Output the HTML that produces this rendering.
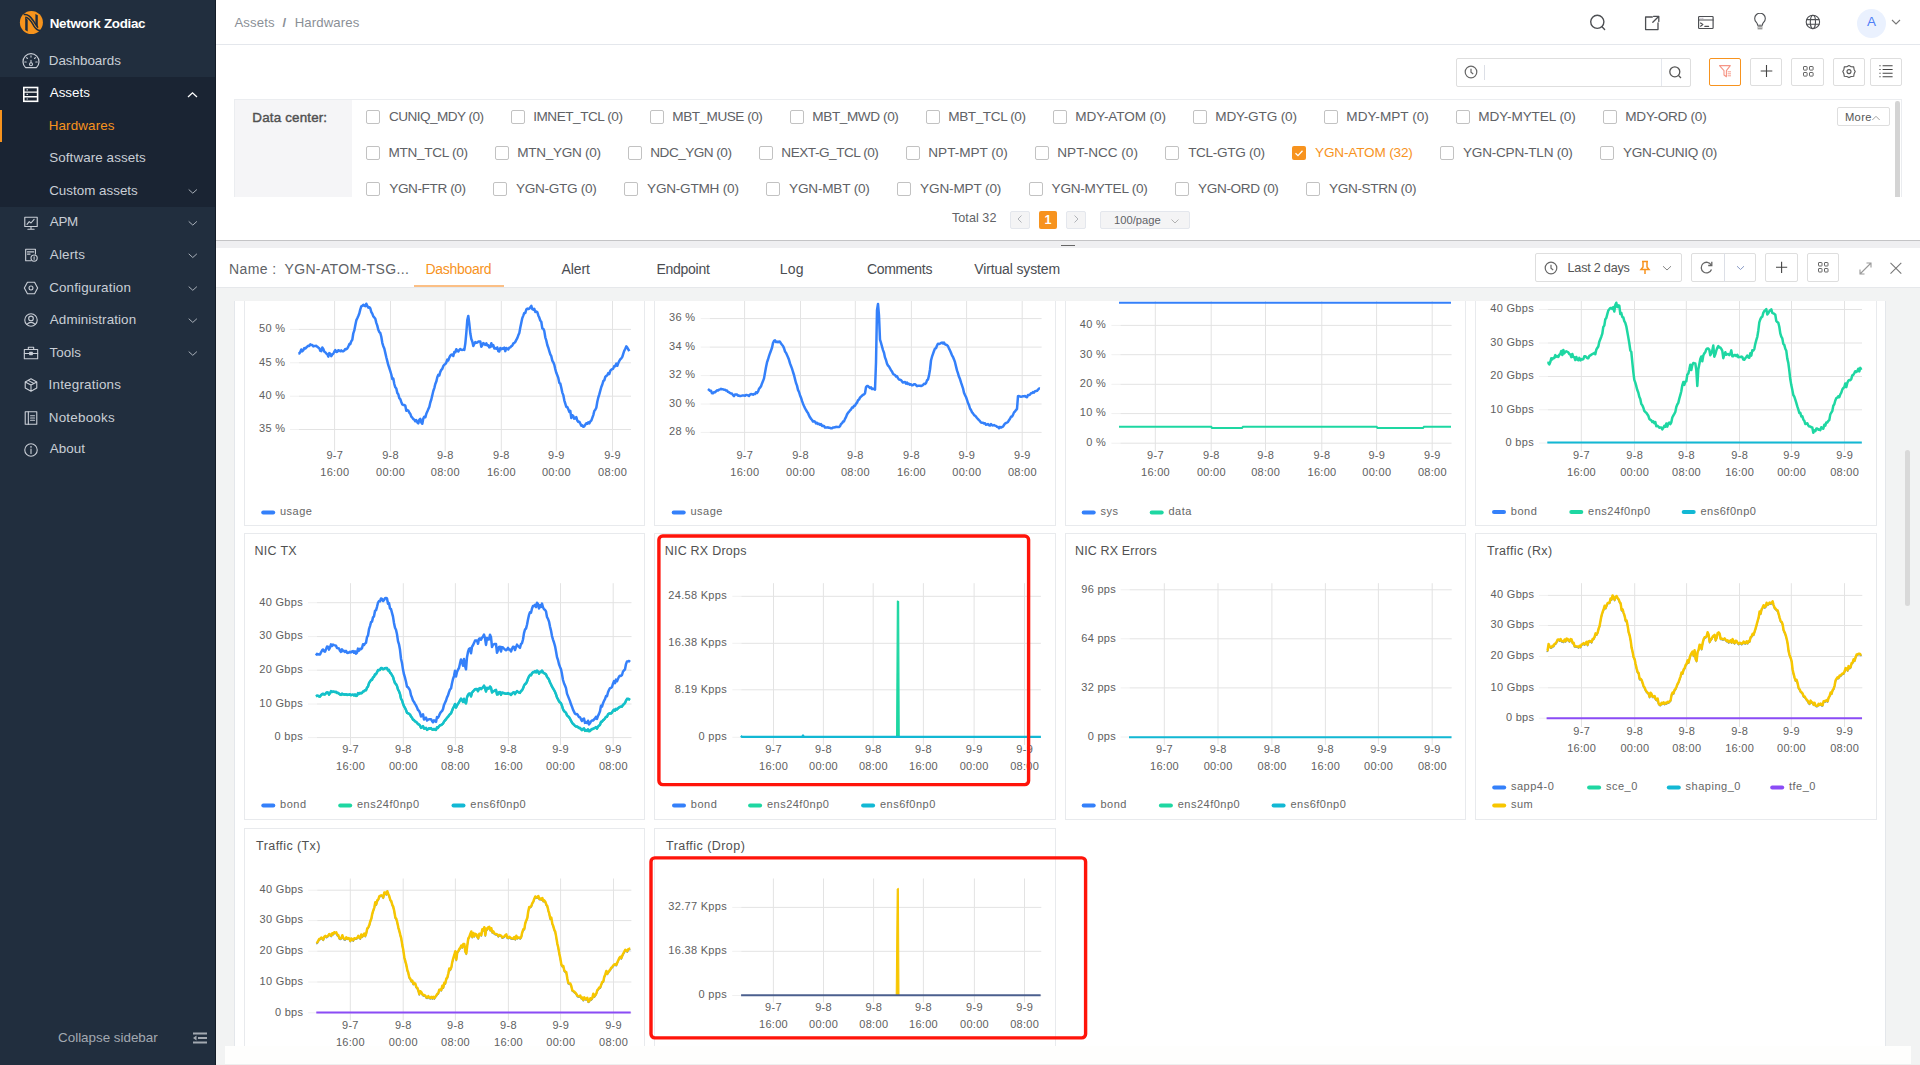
<!DOCTYPE html>
<html><head><meta charset="utf-8"><title>Hardwares</title>
<style>
html,body{margin:0;padding:0;width:1920px;height:1065px;overflow:hidden;background:#fff;font-family:"Liberation Sans", sans-serif;}
.t{position:absolute;line-height:20px;height:20px;white-space:nowrap;}
svg text{font-family:"Liberation Sans", sans-serif;}
</style></head><body>
<div style="position:absolute;left:0px;top:0px;width:216px;height:1065px;background:#212e3e;"></div><div style="position:absolute;left:0px;top:77px;width:216px;height:130px;background:#1a2433;"></div><div style="position:absolute;left:215px;top:0px;width:1px;height:1065px;background:#141c27;"></div><svg style="position:absolute;left:16px;top:8px;" width="32" height="30" viewBox="0 0 32 30"><circle cx="15.4" cy="14.5" r="11.5" fill="#f7941d"/><path d="M9.2 9.3 L11.7 12 V23.6 L9.2 22 Z" fill="#1d2b3d"/><path d="M19.4 6.1 L21.8 7.2 V19.6 L19.4 16.8 Z" fill="#1d2b3d"/><path d="M7.6 6.6 C12.5 5.8 15 9.5 17.5 13 C19.5 16 20.5 18.5 22.2 19.6" fill="none" stroke="#1d2b3d" stroke-width="1.5"/><path d="M9.3 9.2 C13.5 9.4 15.5 14 17.6 17.6 C19.3 20.4 21 22.4 24.2 22.6" fill="none" stroke="#1d2b3d" stroke-width="1.5"/></svg><div class="t" style="left:49.73px;top:13.55px;font-size:13.4px;color:#ffffff;font-weight:bold;letter-spacing:-0.299px;">Network Zodiac</div><div style="position:absolute;left:0px;top:110px;width:2px;height:32px;background:#f7931e;"></div><div class="t" style="left:48.73px;top:50.65px;font-size:13.4px;color:#c9ced6;font-weight:normal;letter-spacing:-0.009px;">Dashboards</div><svg style="position:absolute;left:21px;top:52px;" width="20" height="18" viewBox="0 0 20 18"><path d="M4.6 15.6 H15.4 A8 8 0 1 0 4.6 15.6 Z" fill="none" stroke="#c9ced6" stroke-width="1.2" stroke-linejoin="round"/><circle cx="10" cy="12.2" r="1.5" fill="none" stroke="#c9ced6" stroke-width="1.1"/><path d="M10 10.6 V8.4 M3.8 10 H5.2 M14.8 10 H16.2 M10 3.9 V5.1 M5.6 5.7 L6.4 6.5 M14.4 5.7 L13.6 6.5" stroke="#c9ced6" stroke-width="1.1" stroke-linecap="round"/></svg><div class="t" style="left:49.80px;top:82.75px;font-size:13.4px;color:#ffffff;font-weight:normal;letter-spacing:-0.026px;">Assets</div><svg style="position:absolute;left:22px;top:86px;" width="18" height="17" viewBox="0 0 18 17"><rect x="1.8" y="1.5" width="13.8" height="13.8" fill="none" stroke="#fff" stroke-width="1.6"/><path d="M1.8 6.1 H15.6 M1.8 10.7 H15.6" stroke="#fff" stroke-width="1.4"/><path d="M4.6 3.8 H5.8 M4.6 8.4 H5.8 M4.6 13 H5.8" stroke="#fff" stroke-width="1.2"/></svg><svg style="position:absolute;left:186px;top:90px;" width="13" height="9" viewBox="0 0 13 9"><path d="M2 7 L6.5 2.8 L11 7" fill="none" stroke="#ffffff" stroke-width="1.3"/></svg><div class="t" style="left:48.73px;top:115.65px;font-size:13.4px;color:#f7931e;font-weight:normal;letter-spacing:0.132px;">Hardwares</div><div class="t" style="left:49.20px;top:147.85px;font-size:13.4px;color:#c9ced6;font-weight:normal;letter-spacing:0.095px;">Software assets</div><div class="t" style="left:49.13px;top:180.55px;font-size:13.4px;color:#c9ced6;font-weight:normal;letter-spacing:0.008px;">Custom assets</div><svg style="position:absolute;left:186px;top:187px;" width="13" height="9" viewBox="0 0 13 9"><path d="M2.7 2.5 L6.8 6.200000000000017 L10.9 2.5" fill="none" stroke="#aab1ba" stroke-width="1"/></svg><div class="t" style="left:49.80px;top:212.45px;font-size:13.4px;color:#c9ced6;font-weight:normal;letter-spacing:-0.269px;">APM</div><svg style="position:absolute;left:23px;top:215.00px" width="16" height="16" viewBox="0 0 18 18"><rect x="2" y="2.5" width="14" height="10.5" fill="none" stroke="#c9ced6" stroke-width="1.25" stroke-linejoin="round" stroke-linecap="round"/><path d="M9 13 V16 M5.5 16 H12.5 M4.5 10.5 L7 7.5 L9 9 L12.5 5" fill="none" stroke="#c9ced6" stroke-width="1.25" stroke-linejoin="round" stroke-linecap="round"/></svg><svg style="position:absolute;left:186px;top:219px;" width="13" height="9" viewBox="0 0 13 9"><path d="M2.7 2.4000000000000057 L6.8 6.100000000000023 L10.9 2.4000000000000057" fill="none" stroke="#aab1ba" stroke-width="1"/></svg><div class="t" style="left:49.80px;top:244.85px;font-size:13.4px;color:#c9ced6;font-weight:normal;letter-spacing:0.186px;">Alerts</div><svg style="position:absolute;left:23px;top:247.40px" width="16" height="16" viewBox="0 0 18 18"><path d="M9 15.5 H3 V2.5 H14 V8" fill="none" stroke="#c9ced6" stroke-width="1.25" stroke-linejoin="round" stroke-linecap="round"/><path d="M5 5.5 H12 M5 8 H8" fill="none" stroke="#c9ced6" stroke-width="1.25" stroke-linejoin="round" stroke-linecap="round"/><circle cx="12.5" cy="12.5" r="3.5" fill="none" stroke="#c9ced6" stroke-width="1.25" stroke-linejoin="round" stroke-linecap="round"/><path d="M12.5 11 V12.8 M12.5 14 V14.2" fill="none" stroke="#c9ced6" stroke-width="1.25" stroke-linejoin="round" stroke-linecap="round"/></svg><svg style="position:absolute;left:186px;top:251px;" width="13" height="9" viewBox="0 0 13 9"><path d="M2.7 2.8000000000000114 L6.8 6.5 L10.9 2.8000000000000114" fill="none" stroke="#aab1ba" stroke-width="1"/></svg><div class="t" style="left:49.13px;top:277.65px;font-size:13.4px;color:#c9ced6;font-weight:normal;letter-spacing:0.173px;">Configuration</div><svg style="position:absolute;left:23px;top:280.20px" width="16" height="16" viewBox="0 0 18 18"><path d="M5 2.5 H13 L16.5 9 L13 15.5 H5 L1.5 9 Z" fill="none" stroke="#c9ced6" stroke-width="1.25" stroke-linejoin="round" stroke-linecap="round"/><circle cx="9" cy="9" r="2.2" fill="none" stroke="#c9ced6" stroke-width="1.25" stroke-linejoin="round" stroke-linecap="round"/></svg><svg style="position:absolute;left:186px;top:284px;" width="13" height="9" viewBox="0 0 13 9"><path d="M2.7 2.6000000000000227 L6.8 6.300000000000011 L10.9 2.6000000000000227" fill="none" stroke="#aab1ba" stroke-width="1"/></svg><div class="t" style="left:49.80px;top:309.75px;font-size:13.4px;color:#c9ced6;font-weight:normal;letter-spacing:0.114px;">Administration</div><svg style="position:absolute;left:23px;top:312.30px" width="16" height="16" viewBox="0 0 18 18"><circle cx="9" cy="9" r="7" fill="none" stroke="#c9ced6" stroke-width="1.25" stroke-linejoin="round" stroke-linecap="round"/><circle cx="9" cy="7.3" r="2.6" fill="none" stroke="#c9ced6" stroke-width="1.25" stroke-linejoin="round" stroke-linecap="round"/><path d="M4.3 14 Q9 9.5 13.7 14" fill="none" stroke="#c9ced6" stroke-width="1.25" stroke-linejoin="round" stroke-linecap="round"/></svg><svg style="position:absolute;left:186px;top:316px;" width="13" height="9" viewBox="0 0 13 9"><path d="M2.7 2.7000000000000455 L6.8 6.400000000000034 L10.9 2.7000000000000455" fill="none" stroke="#aab1ba" stroke-width="1"/></svg><div class="t" style="left:49.53px;top:342.65px;font-size:13.4px;color:#c9ced6;font-weight:normal;letter-spacing:0.062px;">Tools</div><svg style="position:absolute;left:23px;top:345.20px" width="16" height="16" viewBox="0 0 18 18"><rect x="1.5" y="5" width="15" height="10.5" fill="none" stroke="#c9ced6" stroke-width="1.25" stroke-linejoin="round" stroke-linecap="round"/><path d="M6 5 V2.5 H12 V5 M1.5 9.5 H16.5" fill="none" stroke="#c9ced6" stroke-width="1.25" stroke-linejoin="round" stroke-linecap="round"/><rect x="7.5" y="8.3" width="3" height="2.5" fill="none" stroke="#c9ced6" stroke-width="1.25" stroke-linejoin="round" stroke-linecap="round"/></svg><svg style="position:absolute;left:186px;top:349px;" width="13" height="9" viewBox="0 0 13 9"><path d="M2.7 2.6000000000000227 L6.8 6.300000000000011 L10.9 2.6000000000000227" fill="none" stroke="#aab1ba" stroke-width="1"/></svg><div class="t" style="left:48.59px;top:374.65px;font-size:13.4px;color:#c9ced6;font-weight:normal;letter-spacing:0.215px;">Integrations</div><svg style="position:absolute;left:23px;top:377.20px" width="16" height="16" viewBox="0 0 18 18"><path d="M9 2 L15.5 5.5 V12.5 L9 16 L2.5 12.5 V5.5 Z M2.5 5.5 L9 9 L15.5 5.5 M9 9 V16 M5.7 3.8 L12.3 7.3" fill="none" stroke="#c9ced6" stroke-width="1.25" stroke-linejoin="round" stroke-linecap="round"/></svg><div class="t" style="left:48.73px;top:407.85px;font-size:13.4px;color:#c9ced6;font-weight:normal;letter-spacing:0.236px;">Notebooks</div><svg style="position:absolute;left:23px;top:410.40px" width="16" height="16" viewBox="0 0 18 18"><rect x="2.5" y="2" width="13" height="14" fill="none" stroke="#c9ced6" stroke-width="1.25" stroke-linejoin="round" stroke-linecap="round"/><path d="M6 2 V16 M8.5 6.5 H13 M8.5 9 H13 M8.5 11.5 H13" fill="none" stroke="#c9ced6" stroke-width="1.25" stroke-linejoin="round" stroke-linecap="round"/></svg><div class="t" style="left:49.80px;top:439.35px;font-size:13.4px;color:#c9ced6;font-weight:normal;letter-spacing:0.023px;">About</div><svg style="position:absolute;left:23px;top:441.90px" width="16" height="16" viewBox="0 0 18 18"><circle cx="9" cy="9" r="7" fill="none" stroke="#c9ced6" stroke-width="1.25" stroke-linejoin="round" stroke-linecap="round"/><path d="M9 8 V13" fill="none" stroke="#c9ced6" stroke-width="1.25" stroke-linejoin="round" stroke-linecap="round" stroke-width="1.6"/><circle cx="9" cy="5.5" r="0.9" fill="#c9ced6"/></svg><div class="t" style="left:58.08px;top:1027.65px;font-size:13.4px;color:#a3a9b1;font-weight:normal;letter-spacing:-0.009px;">Collapse sidebar</div><svg style="position:absolute;left:192px;top:1032px;" width="16" height="12" viewBox="0 0 16 12"><path d="M1 1.5 H15 M6 6 H15 M1 10.5 H15" stroke="#a3a9b1" stroke-width="2"/><path d="M1 6 L4.5 3.5 V8.5 Z" fill="#a3a9b1"/></svg><div style="position:absolute;left:216px;top:44px;width:1704px;height:1px;background:#e4e7ec;"></div><div class="t" style="left:234.40px;top:12.75px;font-size:13.2px;color:#8a8f96;font-weight:normal;letter-spacing:0.112px;">Assets</div><div class="t" style="left:282.50px;top:12.75px;font-size:13.2px;color:#8a8f96;font-weight:bold;">/</div><div class="t" style="left:294.64px;top:12.75px;font-size:13.2px;color:#8a8f96;font-weight:normal;letter-spacing:0.125px;">Hardwares</div><svg style="position:absolute;left:1588px;top:13px;" width="20" height="20" viewBox="0 0 20 20"><circle cx="9.3" cy="8.8" r="6.6" fill="none" stroke="#4d4f53" stroke-linecap="round" stroke-linejoin="round" stroke-width="1.4"/><path d="M14 13.8 L16.6 16.4" fill="none" stroke="#4d4f53" stroke-linecap="round" stroke-linejoin="round" stroke-width="1.4"/></svg><svg style="position:absolute;left:1643px;top:14px;" width="18" height="18" viewBox="0 0 18 18"><path d="M9.3 3 H2.6 V15.6 H15 V9" fill="none" stroke="#4d4f53" stroke-linecap="round" stroke-linejoin="round" stroke-width="1.3"/><path d="M10.5 2.3 H15.8 V7.6 M15.6 2.5 L9.8 8.3" fill="none" stroke="#4d4f53" stroke-linecap="round" stroke-linejoin="round" stroke-width="1.3"/></svg><svg style="position:absolute;left:1697px;top:15px;" width="18" height="15" viewBox="0 0 18 15"><rect x="1.6" y="1.5" width="14.5" height="12" rx="0.8" fill="none" stroke="#4d4f53" stroke-linecap="round" stroke-linejoin="round" stroke-width="1.2"/><path d="M1.6 5 H16.1" fill="none" stroke="#4d4f53" stroke-linecap="round" stroke-linejoin="round" stroke-width="1.1"/><path d="M3.6 8 L5.8 9.6 L3.6 11.2 M7.8 11.3 H11.6" fill="none" stroke="#4d4f53" stroke-linecap="round" stroke-linejoin="round" stroke-width="1.2"/><path d="M3.5 3.3 H7" stroke="#7a6a8a" stroke-width="0.7" stroke-dasharray="1 0.8"/></svg><svg style="position:absolute;left:1753px;top:13px;" width="14" height="18" viewBox="0 0 14 18"><path d="M4.6 12.2 Q4.6 10.6 3.2 9.2 A5.3 5.3 0 1 1 10.8 9.2 Q9.4 10.6 9.4 12.2 Z" fill="none" stroke="#4d4f53" stroke-linecap="round" stroke-linejoin="round" stroke-width="1.1"/><rect x="4.6" y="12.6" width="4.8" height="3.8" fill="#9a9a9a"/><path d="M4.6 14.5 H9.4" stroke="#cfcfcf" stroke-width="0.8"/></svg><svg style="position:absolute;left:1805px;top:14px;" width="16" height="16" viewBox="0 0 16 16"><circle cx="7.9" cy="7.9" r="6.7" fill="none" stroke="#4d4f53" stroke-linecap="round" stroke-linejoin="round" stroke-width="1.1"/><ellipse cx="7.9" cy="7.9" rx="2.6" ry="6.7" fill="none" stroke="#4d4f53" stroke-linecap="round" stroke-linejoin="round" stroke-width="1.1"/><path d="M1.8 5.6 H14 M1.8 10.2 H14" fill="none" stroke="#4d4f53" stroke-linecap="round" stroke-linejoin="round" stroke-width="1.1"/></svg><div style="position:absolute;left:1857px;top:8.8px;width:29px;height:29px;background:#eaf1fe;border-radius:50%;"></div><div class="t" style="left:1671.50px;width:400px;text-align:center;top:12.46px;font-size:13.5px;color:#4f7ef7;font-weight:normal;">A</div><svg style="position:absolute;left:1891px;top:19px;" width="10" height="7" viewBox="0 0 10 7"><path d="M1 1 L5 5 L9 1" fill="none" stroke="#777" stroke-width="1.1"/></svg><div style="position:absolute;left:1456px;top:58px;width:235px;height:29px;box-sizing:border-box;border:1px solid #dedede;border-radius:2px;background:#fff;"></div><div style="position:absolute;left:1661px;top:59px;width:1px;height:27px;background:#e4e7ed;"></div><div style="position:absolute;left:1484px;top:65px;width:1px;height:15px;background:#dcdfe6;"></div><svg style="position:absolute;left:1464px;top:65px;" width="14" height="14" viewBox="0 0 14 14"><circle cx="7" cy="7" r="5.8" fill="none" stroke="#666" stroke-width="1.2"/><path d="M7 3.8 V7.2 L9.2 9" fill="none" stroke="#666" stroke-width="1.2"/></svg><svg style="position:absolute;left:1668px;top:65px;" width="15" height="15" viewBox="0 0 15 15"><circle cx="6.8" cy="6.8" r="5" fill="none" stroke="#555" stroke-width="1.3"/><path d="M10.5 10.5 L13 13" stroke="#555" stroke-width="1.3"/></svg><div style="position:absolute;left:1709px;top:58.2px;width:32px;height:27.6px;box-sizing:border-box;border:1px solid #f7931e;border-radius:2px;background:#fff;"></div><div style="position:absolute;left:1750px;top:58.2px;width:32px;height:27.6px;box-sizing:border-box;border:1px solid #dedede;border-radius:2px;background:#fff;"></div><div style="position:absolute;left:1791px;top:58.2px;width:33px;height:27.6px;box-sizing:border-box;border:1px solid #dedede;border-radius:2px;background:#fff;"></div><div style="position:absolute;left:1833px;top:58.2px;width:32px;height:27.6px;box-sizing:border-box;border:1px solid #dedede;border-radius:2px;background:#fff;"></div><div style="position:absolute;left:1870px;top:58.2px;width:32px;height:27.6px;box-sizing:border-box;border:1px solid #dedede;border-radius:2px;background:#fff;"></div><svg style="position:absolute;left:1718px;top:64px;" width="15" height="15" viewBox="0 0 15 15"><path d="M1.5 1.6 H12.3 L8.4 6.6 V12.8 L6 11 V6.6 Z" fill="none" stroke="#f69585" stroke-width="1.1" stroke-linejoin="round"/><path d="M9.6 7.8 H13 M9.6 9.8 H13 M9.6 11.8 H13" stroke="#f69585" stroke-width="0.9"/></svg><svg style="position:absolute;left:1759px;top:63px;" width="15" height="15" viewBox="0 0 15 15"><path d="M7.5 2 V14 M1.7 8 H13.3" stroke="#444" stroke-width="1.1"/></svg><svg style="position:absolute;left:1801px;top:64px;" width="14" height="14" viewBox="0 0 14 14"><g fill="none" stroke="#666" stroke-width="1"><rect x="2.5" y="2.5" width="3.6" height="3.6" rx=".5"/><rect x="8.5" y="2.5" width="3.6" height="3.6" rx=".5"/><rect x="2.5" y="8.5" width="3.6" height="3.6" rx=".5"/><rect x="8.5" y="8.5" width="3.6" height="3.6" rx=".5"/></g></svg><svg style="position:absolute;left:1841px;top:63px;" width="16" height="16" viewBox="0 0 16 16"><path d="M8 2.6 L10.2 3.7 L12.7 3.9 L13.1 6.4 L14.2 8.6 L13.1 10.8 L12.7 13.3 L10.2 13.5 L8 14.6 L5.8 13.5 L3.3 13.3 L2.9 10.8 L1.8 8.6 L2.9 6.4 L3.3 3.9 L5.8 3.7 Z" fill="none" stroke="#555" stroke-width="1.1" stroke-linejoin="round"/><circle cx="8" cy="8.6" r="2" fill="none" stroke="#555" stroke-width="1.1"/></svg><svg style="position:absolute;left:1878px;top:63px;" width="16" height="16" viewBox="0 0 16 16"><g stroke="#444" stroke-width="1.1"><path d="M4.6 2.8 H14.6 M4.6 6.5 H14.6 M4.6 10.2 H14.6 M4.6 13.8 H14.6"/><path d="M1.4 2.8 H2.6 M1.4 6.5 H2.6 M1.4 10.2 H2.6 M1.4 13.8 H2.6"/></g></svg><div style="position:absolute;left:234px;top:99px;width:1668px;height:98px;box-sizing:border-box;border:1px solid #ebedf0;border-bottom:none;background:#fff;"></div><div style="position:absolute;left:235px;top:100px;width:117px;height:97px;background:#f5f5f7;"></div><div class="t" style="left:252.33px;top:108.05px;font-size:13.4px;color:#505050;font-weight:normal;letter-spacing:0.165px;-webkit-text-stroke:0.4px #505050;">Data center:</div><div style="position:absolute;left:1895.3px;top:101px;width:4.5px;height:96px;background:#d4d4d4;border-radius:2.2px 2.2px 0 0;"></div><div style="position:absolute;left:366.25px;top:110.4px;width:14px;height:14px;box-sizing:border-box;border:1px solid #c2c2c2;border-radius:2px;background:#fff;"></div><div class="t" style="left:388.97px;top:106.86px;font-size:13.6px;color:#606266;font-weight:normal;letter-spacing:-0.565px;">CUNIQ_MDY (0)</div><div style="position:absolute;left:511px;top:110.4px;width:14px;height:14px;box-sizing:border-box;border:1px solid #c2c2c2;border-radius:2px;background:#fff;"></div><div class="t" style="left:533.18px;top:106.86px;font-size:13.6px;color:#606266;font-weight:normal;letter-spacing:-0.472px;">IMNET_TCL (0)</div><div style="position:absolute;left:650px;top:110.4px;width:14px;height:14px;box-sizing:border-box;border:1px solid #c2c2c2;border-radius:2px;background:#fff;"></div><div class="t" style="left:672.31px;top:106.86px;font-size:13.6px;color:#606266;font-weight:normal;letter-spacing:-0.486px;">MBT_MUSE (0)</div><div style="position:absolute;left:790px;top:110.4px;width:14px;height:14px;box-sizing:border-box;border:1px solid #c2c2c2;border-radius:2px;background:#fff;"></div><div class="t" style="left:812.31px;top:106.86px;font-size:13.6px;color:#606266;font-weight:normal;letter-spacing:-0.404px;">MBT_MWD (0)</div><div style="position:absolute;left:926px;top:110.4px;width:14px;height:14px;box-sizing:border-box;border:1px solid #c2c2c2;border-radius:2px;background:#fff;"></div><div class="t" style="left:948.31px;top:106.86px;font-size:13.6px;color:#606266;font-weight:normal;letter-spacing:-0.420px;">MBT_TCL (0)</div><div style="position:absolute;left:1053px;top:110.4px;width:14px;height:14px;box-sizing:border-box;border:1px solid #c2c2c2;border-radius:2px;background:#fff;"></div><div class="t" style="left:1075.31px;top:106.86px;font-size:13.6px;color:#606266;font-weight:normal;letter-spacing:-0.115px;">MDY-ATOM (0)</div><div style="position:absolute;left:1193px;top:110.4px;width:14px;height:14px;box-sizing:border-box;border:1px solid #c2c2c2;border-radius:2px;background:#fff;"></div><div class="t" style="left:1215.31px;top:106.86px;font-size:13.6px;color:#606266;font-weight:normal;letter-spacing:-0.170px;">MDY-GTG (0)</div><div style="position:absolute;left:1324px;top:110.4px;width:14px;height:14px;box-sizing:border-box;border:1px solid #c2c2c2;border-radius:2px;background:#fff;"></div><div class="t" style="left:1346.31px;top:106.86px;font-size:13.6px;color:#606266;font-weight:normal;letter-spacing:0.026px;">MDY-MPT (0)</div><div style="position:absolute;left:1456px;top:110.4px;width:14px;height:14px;box-sizing:border-box;border:1px solid #c2c2c2;border-radius:2px;background:#fff;"></div><div class="t" style="left:1478.31px;top:106.86px;font-size:13.6px;color:#606266;font-weight:normal;letter-spacing:-0.094px;">MDY-MYTEL (0)</div><div style="position:absolute;left:1603px;top:110.4px;width:14px;height:14px;box-sizing:border-box;border:1px solid #c2c2c2;border-radius:2px;background:#fff;"></div><div class="t" style="left:1625.31px;top:106.86px;font-size:13.6px;color:#606266;font-weight:normal;letter-spacing:-0.271px;">MDY-ORD (0)</div><div style="position:absolute;left:366.25px;top:146.3px;width:14px;height:14px;box-sizing:border-box;border:1px solid #c2c2c2;border-radius:2px;background:#fff;"></div><div class="t" style="left:388.56px;top:142.76px;font-size:13.6px;color:#606266;font-weight:normal;letter-spacing:-0.320px;">MTN_TCL (0)</div><div style="position:absolute;left:495px;top:146.3px;width:14px;height:14px;box-sizing:border-box;border:1px solid #c2c2c2;border-radius:2px;background:#fff;"></div><div class="t" style="left:517.31px;top:142.76px;font-size:13.6px;color:#606266;font-weight:normal;letter-spacing:-0.323px;">MTN_YGN (0)</div><div style="position:absolute;left:628px;top:146.3px;width:14px;height:14px;box-sizing:border-box;border:1px solid #c2c2c2;border-radius:2px;background:#fff;"></div><div class="t" style="left:650.31px;top:142.76px;font-size:13.6px;color:#606266;font-weight:normal;letter-spacing:-0.523px;">NDC_YGN (0)</div><div style="position:absolute;left:759px;top:146.3px;width:14px;height:14px;box-sizing:border-box;border:1px solid #c2c2c2;border-radius:2px;background:#fff;"></div><div class="t" style="left:781.31px;top:142.76px;font-size:13.6px;color:#606266;font-weight:normal;letter-spacing:-0.474px;">NEXT-G_TCL (0)</div><div style="position:absolute;left:906px;top:146.3px;width:14px;height:14px;box-sizing:border-box;border:1px solid #c2c2c2;border-radius:2px;background:#fff;"></div><div class="t" style="left:928.31px;top:142.76px;font-size:13.6px;color:#606266;font-weight:normal;letter-spacing:-0.023px;">NPT-MPT (0)</div><div style="position:absolute;left:1035px;top:146.3px;width:14px;height:14px;box-sizing:border-box;border:1px solid #c2c2c2;border-radius:2px;background:#fff;"></div><div class="t" style="left:1057.31px;top:142.76px;font-size:13.6px;color:#606266;font-weight:normal;letter-spacing:-0.018px;">NPT-NCC (0)</div><div style="position:absolute;left:1165px;top:146.3px;width:14px;height:14px;box-sizing:border-box;border:1px solid #c2c2c2;border-radius:2px;background:#fff;"></div><div class="t" style="left:1188.13px;top:142.76px;font-size:13.6px;color:#606266;font-weight:normal;letter-spacing:-0.325px;">TCL-GTG (0)</div><div style="position:absolute;left:1292px;top:146.3px;width:14px;height:14px;background:#f7931e;border-radius:2px;"></div><svg style="position:absolute;left:1292px;top:146.3px;" width="14" height="14" viewBox="0 0 14 14"><path d="M3.5 7.2 L6 9.6 L10.5 4.8" fill="none" stroke="#fff" stroke-width="1.3"/></svg><div class="t" style="left:1315.06px;top:142.76px;font-size:13.6px;color:#f7931e;font-weight:normal;letter-spacing:-0.175px;">YGN-ATOM (32)</div><div style="position:absolute;left:1440px;top:146.3px;width:14px;height:14px;box-sizing:border-box;border:1px solid #c2c2c2;border-radius:2px;background:#fff;"></div><div class="t" style="left:1463.06px;top:142.76px;font-size:13.6px;color:#606266;font-weight:normal;letter-spacing:-0.245px;">YGN-CPN-TLN (0)</div><div style="position:absolute;left:1600px;top:146.3px;width:14px;height:14px;box-sizing:border-box;border:1px solid #c2c2c2;border-radius:2px;background:#fff;"></div><div class="t" style="left:1623.06px;top:142.76px;font-size:13.6px;color:#606266;font-weight:normal;letter-spacing:-0.320px;">YGN-CUNIQ (0)</div><div style="position:absolute;left:366.25px;top:182.3px;width:14px;height:14px;box-sizing:border-box;border:1px solid #c2c2c2;border-radius:2px;background:#fff;"></div><div class="t" style="left:389.31px;top:178.76px;font-size:13.6px;color:#606266;font-weight:normal;letter-spacing:-0.418px;">YGN-FTR (0)</div><div style="position:absolute;left:493px;top:182.3px;width:14px;height:14px;box-sizing:border-box;border:1px solid #c2c2c2;border-radius:2px;background:#fff;"></div><div class="t" style="left:516.06px;top:178.76px;font-size:13.6px;color:#606266;font-weight:normal;letter-spacing:-0.299px;">YGN-GTG (0)</div><div style="position:absolute;left:624px;top:182.3px;width:14px;height:14px;box-sizing:border-box;border:1px solid #c2c2c2;border-radius:2px;background:#fff;"></div><div class="t" style="left:647.06px;top:178.76px;font-size:13.6px;color:#606266;font-weight:normal;letter-spacing:-0.230px;">YGN-GTMH (0)</div><div style="position:absolute;left:766px;top:182.3px;width:14px;height:14px;box-sizing:border-box;border:1px solid #c2c2c2;border-radius:2px;background:#fff;"></div><div class="t" style="left:789.06px;top:178.76px;font-size:13.6px;color:#606266;font-weight:normal;letter-spacing:-0.197px;">YGN-MBT (0)</div><div style="position:absolute;left:897px;top:182.3px;width:14px;height:14px;box-sizing:border-box;border:1px solid #c2c2c2;border-radius:2px;background:#fff;"></div><div class="t" style="left:920.06px;top:178.76px;font-size:13.6px;color:#606266;font-weight:normal;letter-spacing:-0.147px;">YGN-MPT (0)</div><div style="position:absolute;left:1028.5px;top:182.3px;width:14px;height:14px;box-sizing:border-box;border:1px solid #c2c2c2;border-radius:2px;background:#fff;"></div><div class="t" style="left:1051.56px;top:178.76px;font-size:13.6px;color:#606266;font-weight:normal;letter-spacing:-0.238px;">YGN-MYTEL (0)</div><div style="position:absolute;left:1175px;top:182.3px;width:14px;height:14px;box-sizing:border-box;border:1px solid #c2c2c2;border-radius:2px;background:#fff;"></div><div class="t" style="left:1198.06px;top:178.76px;font-size:13.6px;color:#606266;font-weight:normal;letter-spacing:-0.374px;">YGN-ORD (0)</div><div style="position:absolute;left:1306px;top:182.3px;width:14px;height:14px;box-sizing:border-box;border:1px solid #c2c2c2;border-radius:2px;background:#fff;"></div><div class="t" style="left:1329.06px;top:178.76px;font-size:13.6px;color:#606266;font-weight:normal;letter-spacing:-0.358px;">YGN-STRN (0)</div><div style="position:absolute;left:1837.2px;top:107.2px;width:52.5px;height:19.3px;box-sizing:border-box;border:1px solid #dedede;border-radius:2px;background:#fff;"></div><div class="t" style="left:1844.90px;top:107.03px;font-size:11.2px;color:#555;font-weight:normal;letter-spacing:0.373px;">More</div><svg style="position:absolute;left:1871px;top:114px;" width="10" height="8" viewBox="0 0 10 8"><path d="M1.3 6 L5 2.3 L8.7 6" fill="none" stroke="#999" stroke-width="0.9"/></svg><div class="t" style="left:951.95px;top:207.94px;font-size:12.6px;color:#606266;font-weight:normal;letter-spacing:0.055px;">Total 32</div><div style="position:absolute;left:1010px;top:211px;width:20px;height:18px;box-sizing:border-box;border:1px solid #e4e7ed;border-radius:2px;background:#f4f4f5;"></div><svg style="position:absolute;left:1016px;top:213.5px;" width="8" height="10" viewBox="0 0 8 10"><path d="M5.5 1.5 L2 5 L5.5 8.5" fill="none" stroke="#b0b3b8" stroke-width="1"/></svg><div style="position:absolute;left:1039px;top:211px;width:18px;height:18px;background:#f7931e;border-radius:2px;"></div><div class="t" style="left:848.00px;width:400px;text-align:center;top:210.14px;font-size:12.5px;color:#fff;font-weight:bold;">1</div><div style="position:absolute;left:1066px;top:211px;width:20px;height:18px;box-sizing:border-box;border:1px solid #e4e7ed;border-radius:2px;background:#f4f4f5;"></div><svg style="position:absolute;left:1072px;top:213.5px;" width="8" height="10" viewBox="0 0 8 10"><path d="M2.5 1.5 L6 5 L2.5 8.5" fill="none" stroke="#b0b3b8" stroke-width="1"/></svg><div style="position:absolute;left:1100px;top:211px;width:90px;height:18px;box-sizing:border-box;border:1px solid #e4e7ed;border-radius:2px;background:#f4f4f5;"></div><div class="t" style="left:1114.00px;top:209.63px;font-size:11.2px;color:#606266;font-weight:normal;">100/page</div><svg style="position:absolute;left:1170px;top:217.5px;" width="10" height="7" viewBox="0 0 10 7"><path d="M1.5 1.5 L5 5 L8.5 1.5" fill="none" stroke="#aaa" stroke-width="0.9"/></svg><div style="position:absolute;left:216px;top:240px;width:1704px;height:8px;background:#efeff1;border-top:1px solid #c4c4c6;box-sizing:border-box;"></div><div style="position:absolute;left:1061px;top:245px;width:14px;height:1.3px;background:#666;"></div><div style="position:absolute;left:216px;top:248px;width:1704px;height:40px;background:#fff;border-bottom:1px solid #e6e8eb;box-sizing:border-box;"></div><div class="t" style="left:229.08px;top:258.86px;font-size:14px;color:#606266;font-weight:normal;letter-spacing:0.380px;">Name</div><div class="t" style="left:272.20px;top:258.86px;font-size:14px;color:#606266;font-weight:normal;">:</div><div class="t" style="left:284.45px;top:258.86px;font-size:14px;color:#606266;font-weight:normal;letter-spacing:0.364px;">YGN-ATOM-TSG...</div><div class="t" style="left:425.48px;top:258.86px;font-size:14px;color:#f7931e;font-weight:normal;letter-spacing:-0.304px;">Dashboard</div><div style="position:absolute;left:414px;top:285px;width:90px;height:2px;background:#fbbf85;"></div><div class="t" style="left:561.60px;top:258.86px;font-size:14px;color:#4a4d52;font-weight:normal;letter-spacing:-0.125px;">Alert</div><div class="t" style="left:656.38px;top:258.86px;font-size:14px;color:#4a4d52;font-weight:normal;letter-spacing:-0.249px;">Endpoint</div><div class="t" style="left:779.68px;top:258.86px;font-size:14px;color:#4a4d52;font-weight:normal;letter-spacing:0.310px;">Log</div><div class="t" style="left:867.00px;top:258.86px;font-size:14px;color:#4a4d52;font-weight:normal;letter-spacing:-0.329px;">Comments</div><div class="t" style="left:974.33px;top:258.86px;font-size:14px;color:#4a4d52;font-weight:normal;letter-spacing:-0.148px;">Virtual system</div><div style="position:absolute;left:1535px;top:253.4px;width:147px;height:28.4px;box-sizing:border-box;border:1px solid #dedede;border-radius:2px;background:#fff;"></div><svg style="position:absolute;left:1544px;top:261px;" width="14" height="14" viewBox="0 0 14 14"><circle cx="7" cy="7" r="5.8" fill="none" stroke="#666" stroke-width="1.2"/><path d="M7 3.8 V7.2 L9.2 9" fill="none" stroke="#666" stroke-width="1.2"/></svg><div class="t" style="left:1567.59px;top:258.14px;font-size:12.6px;color:#555;font-weight:normal;letter-spacing:-0.220px;">Last 2 days</div><svg style="position:absolute;left:1639px;top:260px;" width="12" height="15" viewBox="0 0 12 15"><path d="M3 1.5 H9 M4 1.5 V7 L2 9.5 H10 L8 7 V1.5 M6 9.5 V14" fill="none" stroke="#f7931e" stroke-width="1.5"/></svg><svg style="position:absolute;left:1662px;top:265px;" width="10" height="7" viewBox="0 0 10 7"><path d="M1 1.2 L5 5 L9 1.2" fill="none" stroke="#777" stroke-width="0.9"/></svg><div style="position:absolute;left:1691px;top:253.4px;width:65px;height:28.4px;box-sizing:border-box;border:1px solid #dedede;border-radius:2px;background:#fff;"></div><div style="position:absolute;left:1724px;top:253.4px;width:1px;height:28.4px;background:#dcdfe6;"></div><svg style="position:absolute;left:1699px;top:260px;" width="15" height="15" viewBox="0 0 15 15"><path d="M12.2 5 A5.3 5.3 0 1 0 12.5 9.5" fill="none" stroke="#666" stroke-width="1.3"/><path d="M12.8 1.8 V5.5 H9.2" fill="none" stroke="#666" stroke-width="1.3"/></svg><svg style="position:absolute;left:1736px;top:265px;" width="9" height="6" viewBox="0 0 9 6"><path d="M1 1.2 L4.5 4.5 L8 1.2" fill="none" stroke="#7a8fc0" stroke-width="0.9"/></svg><div style="position:absolute;left:1765px;top:253.4px;width:33px;height:28.4px;box-sizing:border-box;border:1px solid #dedede;border-radius:2px;background:#fff;"></div><svg style="position:absolute;left:1773px;top:259px;" width="17" height="17" viewBox="0 0 17 17"><path d="M8.6 2.7 V13.9 M3 8.3 H14.2" stroke="#444" stroke-width="1.1"/></svg><div style="position:absolute;left:1807px;top:253.4px;width:32px;height:28.4px;box-sizing:border-box;border:1px solid #dedede;border-radius:2px;background:#fff;"></div><svg style="position:absolute;left:1816px;top:260px;" width="14" height="14" viewBox="0 0 14 14"><g fill="none" stroke="#666" stroke-width="1"><rect x="2.5" y="2.5" width="3.5" height="3.5" rx=".5"/><rect x="8.5" y="2.5" width="3.5" height="3.5" rx=".5"/><rect x="2.5" y="8.5" width="3.5" height="3.5" rx=".5"/><rect x="8.5" y="8.5" width="3.5" height="3.5" rx=".5"/></g></svg><svg style="position:absolute;left:1857px;top:260px;" width="17" height="17" viewBox="0 0 17 17"><path d="M3 14 L14 3 M9.5 3 H14 V7.5 M3 9.5 V14 H7.5" fill="none" stroke="#999" stroke-width="1.1"/></svg><svg style="position:absolute;left:1889px;top:261px;" width="14" height="14" viewBox="0 0 14 14"><path d="M1.5 1.8 L12.3 12.6 M12.3 1.8 L1.5 12.6" stroke="#777" stroke-width="1.1"/></svg><div style="position:absolute;left:216px;top:288px;width:1704px;height:777px;background:#f2f3f3;"></div><div style="position:absolute;left:234px;top:301px;width:1652px;height:745px;background:#fff;box-sizing:border-box;border-left:1px solid #e4e7eb;border-right:1px solid #e4e7eb;"></div><div style="position:absolute;left:1905px;top:450px;width:5px;height:156px;background:#d9d9d9;border-radius:3px;"></div><svg style="position:absolute;left:0;top:0" width="1920" height="1065" viewBox="0 0 1920 1065"><defs><clipPath id="cc"><rect x="235" y="301" width="1650" height="745"/></clipPath></defs><g clip-path="url(#cc)"><rect x="244.5" y="239.5" width="400.0" height="286" fill="#fff" stroke="#e8eaed" stroke-width="1"/><rect x="654.5" y="239.5" width="401.0" height="286" fill="#fff" stroke="#e8eaed" stroke-width="1"/><rect x="1065.5" y="239.5" width="400.0" height="286" fill="#fff" stroke="#e8eaed" stroke-width="1"/><rect x="1475.5" y="239.5" width="401.0" height="286" fill="#fff" stroke="#e8eaed" stroke-width="1"/><rect x="244.5" y="533.5" width="400.0" height="286" fill="#fff" stroke="#e8eaed" stroke-width="1"/><rect x="654.5" y="533.5" width="401.0" height="286" fill="#fff" stroke="#e8eaed" stroke-width="1"/><rect x="1065.5" y="533.5" width="400.0" height="286" fill="#fff" stroke="#e8eaed" stroke-width="1"/><rect x="1475.5" y="533.5" width="401.0" height="286" fill="#fff" stroke="#e8eaed" stroke-width="1"/><rect x="244.5" y="828.5" width="400.0" height="286" fill="#fff" stroke="#e8eaed" stroke-width="1"/><rect x="654.5" y="828.5" width="401.0" height="286" fill="#fff" stroke="#e8eaed" stroke-width="1"/><text x="285.3" y="332.2" font-size="11" fill="#606060" text-anchor="end" letter-spacing="0.3">50 %</text><path d="M290 329.4 H299" stroke="#f0f0f0" stroke-width="1"/><path d="M299 329.4 H631" stroke="#e3e3e3" stroke-width="1"/><text x="285.3" y="365.6" font-size="11" fill="#606060" text-anchor="end" letter-spacing="0.3">45 %</text><path d="M290 362.8 H299" stroke="#f0f0f0" stroke-width="1"/><path d="M299 362.8 H631" stroke="#e3e3e3" stroke-width="1"/><text x="285.3" y="399.0" font-size="11" fill="#606060" text-anchor="end" letter-spacing="0.3">40 %</text><path d="M290 396.2 H299" stroke="#f0f0f0" stroke-width="1"/><path d="M299 396.2 H631" stroke="#e3e3e3" stroke-width="1"/><text x="285.3" y="432.3" font-size="11" fill="#606060" text-anchor="end" letter-spacing="0.3">35 %</text><path d="M290 429.5 H299" stroke="#f0f0f0" stroke-width="1"/><path d="M299 429.5 H631" stroke="#e3e3e3" stroke-width="1"/><path d="M334.6 289 V451.5" stroke="#e3e3e3" stroke-width="1"/><text x="334.8" y="459.1" font-size="11" fill="#606060" text-anchor="middle" letter-spacing="0.3">9-7</text><text x="334.8" y="475.9" font-size="11" fill="#606060" text-anchor="middle" letter-spacing="0.3">16:00</text><path d="M390.5 289 V451.5" stroke="#e3e3e3" stroke-width="1"/><text x="390.6" y="459.1" font-size="11" fill="#606060" text-anchor="middle" letter-spacing="0.3">9-8</text><text x="390.6" y="475.9" font-size="11" fill="#606060" text-anchor="middle" letter-spacing="0.3">00:00</text><path d="M445.2 289 V451.5" stroke="#e3e3e3" stroke-width="1"/><text x="445.3" y="459.1" font-size="11" fill="#606060" text-anchor="middle" letter-spacing="0.3">9-8</text><text x="445.3" y="475.9" font-size="11" fill="#606060" text-anchor="middle" letter-spacing="0.3">08:00</text><path d="M501.3 289 V451.5" stroke="#e3e3e3" stroke-width="1"/><text x="501.4" y="459.1" font-size="11" fill="#606060" text-anchor="middle" letter-spacing="0.3">9-8</text><text x="501.4" y="475.9" font-size="11" fill="#606060" text-anchor="middle" letter-spacing="0.3">16:00</text><path d="M556.3 289 V451.5" stroke="#e3e3e3" stroke-width="1"/><text x="556.4" y="459.1" font-size="11" fill="#606060" text-anchor="middle" letter-spacing="0.3">9-9</text><text x="556.4" y="475.9" font-size="11" fill="#606060" text-anchor="middle" letter-spacing="0.3">00:00</text><path d="M612.5 289 V451.5" stroke="#e3e3e3" stroke-width="1"/><text x="612.6" y="459.1" font-size="11" fill="#606060" text-anchor="middle" letter-spacing="0.3">9-9</text><text x="612.6" y="475.9" font-size="11" fill="#606060" text-anchor="middle" letter-spacing="0.3">08:00</text><path d="M298.3 353.6 L299.3 353.4 L300.3 352.0 L301.3 349.5 L302.3 351.3 L303.3 350.1 L304.3 348.1 L305.3 348.5 L306.3 347.5 L307.3 346.6 L308.3 345.8 L309.3 345.9 L310.3 344.4 L311.3 345.0 L312.3 344.9 L313.3 346.4 L314.3 346.1 L315.3 346.0 L316.3 345.8 L317.3 346.8 L318.3 347.6 L319.3 348.2 L320.3 350.8 L321.3 351.1 L322.3 347.5 L323.3 348.9 L324.3 351.7 L325.3 352.3 L326.3 353.6 L327.3 354.3 L328.3 356.6 L329.3 353.1 L330.3 353.7 L331.3 356.2 L332.3 354.4 L333.3 353.7 L334.3 351.7 L335.3 350.1 L336.3 352.0 L337.3 351.8 L338.3 350.2 L339.3 350.7 L340.3 351.3 L341.3 350.4 L342.3 351.2 L343.3 351.2 L344.3 350.5 L345.3 349.0 L346.3 349.2 L347.3 348.5 L348.3 346.6 L349.3 344.1 L350.3 344.2 L351.3 341.2 L352.3 339.8 L353.3 333.3 L354.3 330.4 L355.3 325.2 L356.3 320.4 L357.3 318.3 L358.3 316.0 L359.3 313.5 L360.3 309.4 L361.3 306.4 L362.3 305.9 L363.3 304.8 L364.3 305.7 L365.3 306.2 L366.3 303.7 L367.3 306.0 L368.3 307.7 L369.3 307.2 L370.3 308.3 L371.3 312.0 L372.3 313.6 L373.3 316.4 L374.3 317.4 L375.3 318.7 L376.3 322.9 L377.3 325.6 L378.3 329.8 L379.3 332.1 L380.3 333.0 L381.3 336.8 L382.3 342.8 L383.3 346.2 L384.3 348.5 L385.3 352.9 L386.3 357.3 L387.3 361.1 L388.3 365.2 L389.3 368.0 L390.3 371.1 L391.3 374.5 L392.3 379.0 L393.3 378.6 L394.3 384.0 L395.3 387.3 L396.3 388.5 L397.3 392.9 L398.3 394.3 L399.3 398.1 L400.3 399.2 L401.3 402.0 L402.3 404.4 L403.3 405.0 L404.3 404.9 L405.3 405.8 L406.3 410.8 L407.3 410.0 L408.3 410.5 L409.3 412.7 L410.3 413.8 L411.3 416.6 L412.3 417.6 L413.3 419.1 L414.3 419.6 L415.3 421.3 L416.3 420.1 L417.3 422.3 L418.3 423.4 L419.3 419.9 L420.3 418.8 L421.3 422.4 L422.3 423.8 L423.3 418.6 L424.3 416.7 L425.3 417.3 L426.3 413.8 L427.3 411.6 L428.3 409.1 L429.3 407.0 L430.3 402.5 L431.3 399.5 L432.3 395.3 L433.3 391.0 L434.3 388.1 L435.3 384.0 L436.3 381.6 L437.3 377.2 L438.3 374.8 L439.3 375.5 L440.3 371.9 L441.3 369.9 L442.3 368.8 L443.3 366.1 L444.3 364.8 L445.3 364.1 L446.3 362.5 L447.3 359.6 L448.3 360.4 L449.3 357.6 L450.3 355.7 L451.3 354.8 L452.3 354.6 L453.3 355.9 L454.3 352.0 L455.3 352.3 L456.3 349.2 L457.3 350.9 L458.3 351.5 L459.3 349.9 L460.3 349.1 L461.3 349.8 L462.3 350.0 L463.3 349.5 L464.3 350.0 L465.3 343.6 L466.3 333.1 L467.3 320.0 L468.3 315.9 L469.3 323.6 L470.3 333.3 L471.3 339.0 L472.3 341.4 L473.3 346.0 L474.3 344.0 L475.3 342.1 L476.3 342.8 L477.3 342.6 L478.3 341.5 L479.3 341.5 L480.3 341.5 L481.3 346.7 L482.3 345.3 L483.3 343.1 L484.3 343.7 L485.3 344.9 L486.3 343.4 L487.3 345.4 L488.3 345.2 L489.3 347.4 L490.3 347.1 L491.3 343.2 L492.3 346.2 L493.3 345.1 L494.3 348.5 L495.3 348.1 L496.3 348.7 L497.3 347.4 L498.3 351.1 L499.3 351.5 L500.3 348.0 L501.3 349.3 L502.3 348.3 L503.3 348.8 L504.3 347.7 L505.3 351.1 L506.3 348.0 L507.3 348.6 L508.3 349.4 L509.3 347.7 L510.3 347.3 L511.3 346.2 L512.3 345.6 L513.3 343.4 L514.3 343.0 L515.3 341.9 L516.3 339.9 L517.3 338.1 L518.3 335.3 L519.3 333.1 L520.3 327.5 L521.3 322.8 L522.3 318.1 L523.3 315.6 L524.3 312.9 L525.3 312.9 L526.3 309.5 L527.3 308.6 L528.3 309.0 L529.3 308.6 L530.3 307.4 L531.3 305.9 L532.3 309.2 L533.3 309.7 L534.3 308.8 L535.3 312.0 L536.3 311.4 L537.3 312.2 L538.3 315.4 L539.3 317.6 L540.3 320.5 L541.3 321.7 L542.3 328.4 L543.3 328.8 L544.3 331.1 L545.3 337.3 L546.3 340.5 L547.3 345.0 L548.3 347.7 L549.3 351.1 L550.3 354.4 L551.3 356.2 L552.3 360.6 L553.3 362.3 L554.3 364.8 L555.3 369.1 L556.3 372.8 L557.3 375.3 L558.3 377.9 L559.3 382.8 L560.3 383.6 L561.3 387.7 L562.3 392.6 L563.3 395.1 L564.3 400.3 L565.3 403.7 L566.3 407.0 L567.3 407.1 L568.3 409.3 L569.3 411.9 L570.3 410.8 L571.3 418.1 L572.3 415.3 L573.3 416.1 L574.3 418.7 L575.3 418.3 L576.3 417.1 L577.3 420.6 L578.3 421.9 L579.3 421.7 L580.3 423.5 L581.3 425.8 L582.3 425.3 L583.3 426.8 L584.3 426.3 L585.3 424.7 L586.3 423.2 L587.3 423.7 L588.3 422.3 L589.3 423.3 L590.3 421.4 L591.3 420.6 L592.3 417.8 L593.3 415.1 L594.3 411.0 L595.3 409.8 L596.3 407.8 L597.3 401.7 L598.3 397.5 L599.3 394.4 L600.3 390.7 L601.3 387.0 L602.3 384.5 L603.3 381.1 L604.3 380.3 L605.3 376.9 L606.3 375.8 L607.3 375.3 L608.3 373.1 L609.3 373.9 L610.3 370.8 L611.3 369.6 L612.3 369.2 L613.3 368.4 L614.3 365.9 L615.3 366.2 L616.3 363.6 L617.3 365.8 L618.3 363.1 L619.3 360.9 L620.3 359.3 L621.3 358.4 L622.3 356.9 L623.3 353.6 L624.3 350.7 L625.3 348.7 L626.3 346.4 L627.3 347.6 L628.3 349.3 L629.3 351.2" fill="none" stroke="#3480fa" stroke-width="2.5" stroke-linejoin="round"/><rect x="261.2" y="510.5" width="14" height="4" rx="2" fill="#3480fa"/><text x="280.0" y="515.4" font-size="11" fill="#666" text-anchor="start" letter-spacing="0.5">usage</text><text x="695.3" y="321.4" font-size="11" fill="#606060" text-anchor="end" letter-spacing="0.3">36 %</text><path d="M700.7 318.6 H709.7" stroke="#f0f0f0" stroke-width="1"/><path d="M709.7 318.6 H1041.6" stroke="#e3e3e3" stroke-width="1"/><text x="695.3" y="349.9" font-size="11" fill="#606060" text-anchor="end" letter-spacing="0.3">34 %</text><path d="M700.7 347.1 H709.7" stroke="#f0f0f0" stroke-width="1"/><path d="M709.7 347.1 H1041.6" stroke="#e3e3e3" stroke-width="1"/><text x="695.3" y="378.4" font-size="11" fill="#606060" text-anchor="end" letter-spacing="0.3">32 %</text><path d="M700.7 375.6 H709.7" stroke="#f0f0f0" stroke-width="1"/><path d="M709.7 375.6 H1041.6" stroke="#e3e3e3" stroke-width="1"/><text x="695.3" y="406.8" font-size="11" fill="#606060" text-anchor="end" letter-spacing="0.3">30 %</text><path d="M700.7 404.0 H709.7" stroke="#f0f0f0" stroke-width="1"/><path d="M709.7 404.0 H1041.6" stroke="#e3e3e3" stroke-width="1"/><text x="695.3" y="435.2" font-size="11" fill="#606060" text-anchor="end" letter-spacing="0.3">28 %</text><path d="M700.7 432.4 H709.7" stroke="#f0f0f0" stroke-width="1"/><path d="M709.7 432.4 H1041.6" stroke="#e3e3e3" stroke-width="1"/><path d="M744.6 289 V451.5" stroke="#e3e3e3" stroke-width="1"/><text x="744.8" y="459.1" font-size="11" fill="#606060" text-anchor="middle" letter-spacing="0.3">9-7</text><text x="744.8" y="475.9" font-size="11" fill="#606060" text-anchor="middle" letter-spacing="0.3">16:00</text><path d="M800.5 289 V451.5" stroke="#e3e3e3" stroke-width="1"/><text x="800.6" y="459.1" font-size="11" fill="#606060" text-anchor="middle" letter-spacing="0.3">9-8</text><text x="800.6" y="475.9" font-size="11" fill="#606060" text-anchor="middle" letter-spacing="0.3">00:00</text><path d="M855.3 289 V451.5" stroke="#e3e3e3" stroke-width="1"/><text x="855.4" y="459.1" font-size="11" fill="#606060" text-anchor="middle" letter-spacing="0.3">9-8</text><text x="855.4" y="475.9" font-size="11" fill="#606060" text-anchor="middle" letter-spacing="0.3">08:00</text><path d="M911.4 289 V451.5" stroke="#e3e3e3" stroke-width="1"/><text x="911.5" y="459.1" font-size="11" fill="#606060" text-anchor="middle" letter-spacing="0.3">9-8</text><text x="911.5" y="475.9" font-size="11" fill="#606060" text-anchor="middle" letter-spacing="0.3">16:00</text><path d="M966.6 289 V451.5" stroke="#e3e3e3" stroke-width="1"/><text x="966.8" y="459.1" font-size="11" fill="#606060" text-anchor="middle" letter-spacing="0.3">9-9</text><text x="966.8" y="475.9" font-size="11" fill="#606060" text-anchor="middle" letter-spacing="0.3">00:00</text><path d="M1022.2 289 V451.5" stroke="#e3e3e3" stroke-width="1"/><text x="1022.4" y="459.1" font-size="11" fill="#606060" text-anchor="middle" letter-spacing="0.3">9-9</text><text x="1022.4" y="475.9" font-size="11" fill="#606060" text-anchor="middle" letter-spacing="0.3">08:00</text><path d="M708.0 389.0 L709.0 389.9 L710.0 390.8 L711.0 390.7 L712.0 393.2 L713.0 393.2 L714.0 392.3 L715.0 392.2 L716.0 391.3 L717.0 390.3 L718.0 390.6 L719.0 389.7 L720.0 389.3 L721.0 388.8 L722.0 389.3 L723.0 389.2 L724.0 389.8 L725.0 389.7 L726.0 390.5 L727.0 390.6 L728.0 391.9 L729.0 392.2 L730.0 392.9 L731.0 393.6 L732.0 393.6 L733.0 395.1 L734.0 396.1 L735.0 394.6 L736.0 394.4 L737.0 394.6 L738.0 395.8 L739.0 395.6 L740.0 396.0 L741.0 395.9 L742.0 395.6 L743.0 395.6 L744.0 395.4 L745.0 395.8 L746.0 394.9 L747.0 395.1 L748.0 395.4 L749.0 396.0 L750.0 394.6 L751.0 394.1 L752.0 394.2 L753.0 394.7 L754.0 393.9 L755.0 394.1 L756.0 392.3 L757.0 392.9 L758.0 391.6 L759.0 388.8 L760.0 387.7 L761.0 386.3 L762.0 383.4 L763.0 381.1 L764.0 378.4 L765.0 372.8 L766.0 367.2 L767.0 362.4 L768.0 359.5 L769.0 356.1 L770.0 353.2 L771.0 350.5 L772.0 347.8 L773.0 343.1 L774.0 340.9 L775.0 340.4 L776.0 342.0 L777.0 341.6 L778.0 342.2 L779.0 341.5 L780.0 341.8 L781.0 343.5 L782.0 344.8 L783.0 346.0 L784.0 348.1 L785.0 351.4 L786.0 352.7 L787.0 355.0 L788.0 357.2 L789.0 359.8 L790.0 363.4 L791.0 366.0 L792.0 368.6 L793.0 372.0 L794.0 375.0 L795.0 379.1 L796.0 383.0 L797.0 385.6 L798.0 389.9 L799.0 392.0 L800.0 395.2 L801.0 397.7 L802.0 400.9 L803.0 403.7 L804.0 406.0 L805.0 408.1 L806.0 410.0 L807.0 411.7 L808.0 413.1 L809.0 415.4 L810.0 417.3 L811.0 418.8 L812.0 419.8 L813.0 421.5 L814.0 421.3 L815.0 421.6 L816.0 423.4 L817.0 422.7 L818.0 424.1 L819.0 423.8 L820.0 424.7 L821.0 424.1 L822.0 425.9 L823.0 425.8 L824.0 425.9 L825.0 427.6 L826.0 427.6 L827.0 427.4 L828.0 427.3 L829.0 427.8 L830.0 427.8 L831.0 428.3 L832.0 428.3 L833.0 427.5 L834.0 427.4 L835.0 427.3 L836.0 426.8 L837.0 427.1 L838.0 427.1 L839.0 426.9 L840.0 426.2 L841.0 424.0 L842.0 423.3 L843.0 421.6 L844.0 421.4 L845.0 418.9 L846.0 417.1 L847.0 414.5 L848.0 412.8 L849.0 411.9 L850.0 410.4 L851.0 409.5 L852.0 407.6 L853.0 407.5 L854.0 405.8 L855.0 405.8 L856.0 403.7 L857.0 402.8 L858.0 400.3 L859.0 399.6 L860.0 397.7 L861.0 396.6 L862.0 395.7 L863.0 394.8 L864.0 394.3 L865.0 393.3 L866.0 387.3 L867.0 385.9 L868.0 386.0 L869.0 387.1 L870.0 387.9 L871.0 387.4 L872.0 389.0 L873.0 388.8 L874.0 389.0 L875.0 389.6 L876.0 362.6 L877.0 310.1 L878.0 303.9 L879.0 315.7 L880.0 339.7 L881.0 342.9 L882.0 346.5 L883.0 350.1 L884.0 352.8 L885.0 357.4 L886.0 360.0 L887.0 363.6 L888.0 365.6 L889.0 366.5 L890.0 368.3 L891.0 370.3 L892.0 371.6 L893.0 373.8 L894.0 374.5 L895.0 375.1 L896.0 376.5 L897.0 376.2 L898.0 378.3 L899.0 379.5 L900.0 379.7 L901.0 380.1 L902.0 381.4 L903.0 382.6 L904.0 382.2 L905.0 382.0 L906.0 383.6 L907.0 382.5 L908.0 383.9 L909.0 383.8 L910.0 384.7 L911.0 384.2 L912.0 385.4 L913.0 385.1 L914.0 384.2 L915.0 384.2 L916.0 385.2 L917.0 386.2 L918.0 385.8 L919.0 385.8 L920.0 385.7 L921.0 386.1 L922.0 385.7 L923.0 385.0 L924.0 383.8 L925.0 384.0 L926.0 383.1 L927.0 380.3 L928.0 379.5 L929.0 375.4 L930.0 369.5 L931.0 360.5 L932.0 356.7 L933.0 353.8 L934.0 351.0 L935.0 348.6 L936.0 348.2 L937.0 345.5 L938.0 343.7 L939.0 344.0 L940.0 343.6 L941.0 343.0 L942.0 342.6 L943.0 343.4 L944.0 342.6 L945.0 344.4 L946.0 344.7 L947.0 345.2 L948.0 346.1 L949.0 348.6 L950.0 350.4 L951.0 352.7 L952.0 355.4 L953.0 357.0 L954.0 359.4 L955.0 362.2 L956.0 366.4 L957.0 370.4 L958.0 373.4 L959.0 376.8 L960.0 379.1 L961.0 382.4 L962.0 385.4 L963.0 388.3 L964.0 392.7 L965.0 395.1 L966.0 397.0 L967.0 399.8 L968.0 403.0 L969.0 405.1 L970.0 408.5 L971.0 410.0 L972.0 412.2 L973.0 413.4 L974.0 414.9 L975.0 415.7 L976.0 416.7 L977.0 418.0 L978.0 419.1 L979.0 420.2 L980.0 421.2 L981.0 422.5 L982.0 422.7 L983.0 422.7 L984.0 423.5 L985.0 423.3 L986.0 424.7 L987.0 424.6 L988.0 424.0 L989.0 425.3 L990.0 425.5 L991.0 424.0 L992.0 425.1 L993.0 425.5 L994.0 425.0 L995.0 425.6 L996.0 425.9 L997.0 426.8 L998.0 427.0 L999.0 428.2 L1000.0 426.9 L1001.0 427.6 L1002.0 427.0 L1003.0 426.6 L1004.0 425.0 L1005.0 423.6 L1006.0 423.0 L1007.0 422.6 L1008.0 421.9 L1009.0 420.2 L1010.0 418.8 L1011.0 416.8 L1012.0 416.5 L1013.0 414.9 L1014.0 412.4 L1015.0 411.5 L1016.0 410.1 L1017.0 408.9 L1018.0 396.2 L1019.0 396.0 L1020.0 396.5 L1021.0 396.7 L1022.0 396.5 L1023.0 396.2 L1024.0 396.2 L1025.0 396.0 L1026.0 396.9 L1027.0 397.3 L1028.0 394.9 L1029.0 395.1 L1030.0 394.6 L1031.0 393.3 L1032.0 393.1 L1033.0 392.1 L1034.0 392.6 L1035.0 391.3 L1036.0 391.1 L1037.0 390.8 L1038.0 389.7 L1039.0 388.5 L1040.0 388.6" fill="none" stroke="#3480fa" stroke-width="2.5" stroke-linejoin="round"/><rect x="671.7" y="510.5" width="14" height="4" rx="2" fill="#3480fa"/><text x="690.5" y="515.4" font-size="11" fill="#666" text-anchor="start" letter-spacing="0.5">usage</text><text x="1106.0" y="328.2" font-size="11" fill="#606060" text-anchor="end" letter-spacing="0.3">40 %</text><path d="M1111.4 325.4 H1120.4" stroke="#f0f0f0" stroke-width="1"/><path d="M1120.4 325.4 H1451.6" stroke="#e3e3e3" stroke-width="1"/><text x="1106.0" y="357.5" font-size="11" fill="#606060" text-anchor="end" letter-spacing="0.3">30 %</text><path d="M1111.4 354.7 H1120.4" stroke="#f0f0f0" stroke-width="1"/><path d="M1120.4 354.7 H1451.6" stroke="#e3e3e3" stroke-width="1"/><text x="1106.0" y="387.1" font-size="11" fill="#606060" text-anchor="end" letter-spacing="0.3">20 %</text><path d="M1111.4 384.3 H1120.4" stroke="#f0f0f0" stroke-width="1"/><path d="M1120.4 384.3 H1451.6" stroke="#e3e3e3" stroke-width="1"/><text x="1106.0" y="416.4" font-size="11" fill="#606060" text-anchor="end" letter-spacing="0.3">10 %</text><path d="M1111.4 413.6 H1120.4" stroke="#f0f0f0" stroke-width="1"/><path d="M1120.4 413.6 H1451.6" stroke="#e3e3e3" stroke-width="1"/><text x="1106.0" y="446.0" font-size="11" fill="#606060" text-anchor="end" letter-spacing="0.3">0 %</text><path d="M1111.4 443.2 H1120.4" stroke="#f0f0f0" stroke-width="1"/><path d="M1120.4 443.2 H1451.6" stroke="#e3e3e3" stroke-width="1"/><path d="M1155.3 289 V451.5" stroke="#e3e3e3" stroke-width="1"/><text x="1155.5" y="459.1" font-size="11" fill="#606060" text-anchor="middle" letter-spacing="0.3">9-7</text><text x="1155.5" y="475.9" font-size="11" fill="#606060" text-anchor="middle" letter-spacing="0.3">16:00</text><path d="M1211.2 289 V451.5" stroke="#e3e3e3" stroke-width="1"/><text x="1211.4" y="459.1" font-size="11" fill="#606060" text-anchor="middle" letter-spacing="0.3">9-8</text><text x="1211.4" y="475.9" font-size="11" fill="#606060" text-anchor="middle" letter-spacing="0.3">00:00</text><path d="M1265.5 289 V451.5" stroke="#e3e3e3" stroke-width="1"/><text x="1265.7" y="459.1" font-size="11" fill="#606060" text-anchor="middle" letter-spacing="0.3">9-8</text><text x="1265.7" y="475.9" font-size="11" fill="#606060" text-anchor="middle" letter-spacing="0.3">08:00</text><path d="M1321.8 289 V451.5" stroke="#e3e3e3" stroke-width="1"/><text x="1322.0" y="459.1" font-size="11" fill="#606060" text-anchor="middle" letter-spacing="0.3">9-8</text><text x="1322.0" y="475.9" font-size="11" fill="#606060" text-anchor="middle" letter-spacing="0.3">16:00</text><path d="M1376.6 289 V451.5" stroke="#e3e3e3" stroke-width="1"/><text x="1376.8" y="459.1" font-size="11" fill="#606060" text-anchor="middle" letter-spacing="0.3">9-9</text><text x="1376.8" y="475.9" font-size="11" fill="#606060" text-anchor="middle" letter-spacing="0.3">00:00</text><path d="M1432.2 289 V451.5" stroke="#e3e3e3" stroke-width="1"/><text x="1432.4" y="459.1" font-size="11" fill="#606060" text-anchor="middle" letter-spacing="0.3">9-9</text><text x="1432.4" y="475.9" font-size="11" fill="#606060" text-anchor="middle" letter-spacing="0.3">08:00</text><path d="M1119 302.8 H1451" stroke="#3480fa" stroke-width="2"/><path d="M1119 426.8 H1211.2 L1212 427.9 H1242 L1243 426.8 H1376.6 L1377.5 427.9 H1423 L1424 426.8 H1451" fill="none" stroke="#1ed7a2" stroke-width="2"/><rect x="1081.7" y="510.5" width="14" height="4" rx="2" fill="#3480fa"/><text x="1100.5" y="515.4" font-size="11" fill="#666" text-anchor="start" letter-spacing="0.5">sys</text><rect x="1149.7" y="510.5" width="14" height="4" rx="2" fill="#1ed7a2"/><text x="1168.5" y="515.4" font-size="11" fill="#666" text-anchor="start" letter-spacing="0.5">data</text><text x="1534.0" y="312.3" font-size="11" fill="#606060" text-anchor="end" letter-spacing="0.3">40 Gbps</text><path d="M1539 309.5 H1548" stroke="#f0f0f0" stroke-width="1"/><path d="M1548 309.5 H1862" stroke="#e3e3e3" stroke-width="1"/><text x="1534.0" y="345.8" font-size="11" fill="#606060" text-anchor="end" letter-spacing="0.3">30 Gbps</text><path d="M1539 343.0 H1548" stroke="#f0f0f0" stroke-width="1"/><path d="M1548 343.0 H1862" stroke="#e3e3e3" stroke-width="1"/><text x="1534.0" y="379.3" font-size="11" fill="#606060" text-anchor="end" letter-spacing="0.3">20 Gbps</text><path d="M1539 376.5 H1548" stroke="#f0f0f0" stroke-width="1"/><path d="M1548 376.5 H1862" stroke="#e3e3e3" stroke-width="1"/><text x="1534.0" y="412.6" font-size="11" fill="#606060" text-anchor="end" letter-spacing="0.3">10 Gbps</text><path d="M1539 409.8 H1548" stroke="#f0f0f0" stroke-width="1"/><path d="M1548 409.8 H1862" stroke="#e3e3e3" stroke-width="1"/><text x="1534.0" y="445.8" font-size="11" fill="#606060" text-anchor="end" letter-spacing="0.3">0 bps</text><path d="M1539 443.0 H1548" stroke="#f0f0f0" stroke-width="1"/><path d="M1548 443.0 H1862" stroke="#e3e3e3" stroke-width="1"/><path d="M1581.3 289 V451.5" stroke="#e3e3e3" stroke-width="1"/><text x="1581.5" y="459.1" font-size="11" fill="#606060" text-anchor="middle" letter-spacing="0.3">9-7</text><text x="1581.5" y="475.9" font-size="11" fill="#606060" text-anchor="middle" letter-spacing="0.3">16:00</text><path d="M1634.5 289 V451.5" stroke="#e3e3e3" stroke-width="1"/><text x="1634.7" y="459.1" font-size="11" fill="#606060" text-anchor="middle" letter-spacing="0.3">9-8</text><text x="1634.7" y="475.9" font-size="11" fill="#606060" text-anchor="middle" letter-spacing="0.3">00:00</text><path d="M1686.3 289 V451.5" stroke="#e3e3e3" stroke-width="1"/><text x="1686.5" y="459.1" font-size="11" fill="#606060" text-anchor="middle" letter-spacing="0.3">9-8</text><text x="1686.5" y="475.9" font-size="11" fill="#606060" text-anchor="middle" letter-spacing="0.3">08:00</text><path d="M1739.5 289 V451.5" stroke="#e3e3e3" stroke-width="1"/><text x="1739.7" y="459.1" font-size="11" fill="#606060" text-anchor="middle" letter-spacing="0.3">9-8</text><text x="1739.7" y="475.9" font-size="11" fill="#606060" text-anchor="middle" letter-spacing="0.3">16:00</text><path d="M1791.5 289 V451.5" stroke="#e3e3e3" stroke-width="1"/><text x="1791.7" y="459.1" font-size="11" fill="#606060" text-anchor="middle" letter-spacing="0.3">9-9</text><text x="1791.7" y="475.9" font-size="11" fill="#606060" text-anchor="middle" letter-spacing="0.3">00:00</text><path d="M1844.5 289 V451.5" stroke="#e3e3e3" stroke-width="1"/><text x="1844.7" y="459.1" font-size="11" fill="#606060" text-anchor="middle" letter-spacing="0.3">9-9</text><text x="1844.7" y="475.9" font-size="11" fill="#606060" text-anchor="middle" letter-spacing="0.3">08:00</text><path d="M1547.3 362.9 L1548.3 362.8 L1549.3 364.4 L1550.3 362.1 L1551.3 358.2 L1552.3 359.3 L1553.3 357.9 L1554.3 358.0 L1555.3 355.1 L1556.3 356.6 L1557.3 356.1 L1558.3 357.0 L1559.3 354.7 L1560.3 353.9 L1561.3 351.0 L1562.3 355.0 L1563.3 349.9 L1564.3 353.4 L1565.3 351.9 L1566.3 351.2 L1567.3 351.8 L1568.3 352.3 L1569.3 354.1 L1570.3 354.5 L1571.3 357.1 L1572.3 354.0 L1573.3 357.1 L1574.3 357.3 L1575.3 360.0 L1576.3 357.0 L1577.3 359.6 L1578.3 360.3 L1579.3 357.9 L1580.3 360.4 L1581.3 359.0 L1582.3 359.5 L1583.3 359.1 L1584.3 356.3 L1585.3 356.3 L1586.3 357.1 L1587.3 358.3 L1588.3 358.2 L1589.3 355.9 L1590.3 355.5 L1591.3 354.7 L1592.3 354.2 L1593.3 353.7 L1594.3 352.9 L1595.3 354.3 L1596.3 349.7 L1597.3 348.0 L1598.3 346.5 L1599.3 341.8 L1600.3 339.3 L1601.3 336.7 L1602.3 333.7 L1603.3 326.9 L1604.3 325.6 L1605.3 319.3 L1606.3 318.0 L1607.3 314.1 L1608.3 310.5 L1609.3 309.2 L1610.3 307.9 L1611.3 308.1 L1612.3 308.9 L1613.3 307.1 L1614.3 311.5 L1615.3 304.9 L1616.3 302.7 L1617.3 307.0 L1618.3 305.3 L1619.3 305.7 L1620.3 314.0 L1621.3 313.0 L1622.3 317.0 L1623.3 317.4 L1624.3 321.1 L1625.3 322.8 L1626.3 326.3 L1627.3 331.8 L1628.3 337.4 L1629.3 343.3 L1630.3 350.3 L1631.3 351.9 L1632.3 362.2 L1633.3 371.9 L1634.3 379.9 L1635.3 382.7 L1636.3 386.2 L1637.3 390.1 L1638.3 392.5 L1639.3 396.8 L1640.3 399.0 L1641.3 404.0 L1642.3 405.2 L1643.3 407.5 L1644.3 410.8 L1645.3 411.9 L1646.3 412.7 L1647.3 414.2 L1648.3 415.7 L1649.3 418.8 L1650.3 419.8 L1651.3 420.4 L1652.3 422.0 L1653.3 421.3 L1654.3 423.3 L1655.3 422.0 L1656.3 426.2 L1657.3 425.7 L1658.3 426.5 L1659.3 427.7 L1660.3 427.4 L1661.3 427.5 L1662.3 429.4 L1663.3 427.8 L1664.3 425.9 L1665.3 426.7 L1666.3 423.5 L1667.3 426.6 L1668.3 423.4 L1669.3 422.6 L1670.3 424.2 L1671.3 422.3 L1672.3 417.5 L1673.3 415.6 L1674.3 413.9 L1675.3 412.0 L1676.3 407.0 L1677.3 404.5 L1678.3 402.9 L1679.3 398.6 L1680.3 395.2 L1681.3 391.2 L1682.3 385.3 L1683.3 382.0 L1684.3 384.9 L1685.3 381.6 L1686.3 381.3 L1687.3 374.6 L1688.3 373.6 L1689.3 369.6 L1690.3 364.8 L1691.3 370.0 L1692.3 365.1 L1693.3 363.0 L1694.3 363.3 L1695.3 363.5 L1696.3 370.0 L1697.3 386.0 L1698.3 369.6 L1699.3 364.2 L1700.3 359.0 L1701.3 356.5 L1702.3 361.2 L1703.3 355.5 L1704.3 353.4 L1705.3 352.2 L1706.3 349.4 L1707.3 348.4 L1708.3 348.6 L1709.3 349.8 L1710.3 355.2 L1711.3 353.4 L1712.3 350.5 L1713.3 345.5 L1714.3 356.7 L1715.3 354.3 L1716.3 350.6 L1717.3 347.9 L1718.3 346.0 L1719.3 347.6 L1720.3 347.4 L1721.3 348.9 L1722.3 350.8 L1723.3 358.2 L1724.3 354.7 L1725.3 352.2 L1726.3 354.8 L1727.3 354.2 L1728.3 354.0 L1729.3 355.1 L1730.3 353.9 L1731.3 350.4 L1732.3 356.3 L1733.3 356.2 L1734.3 354.9 L1735.3 355.0 L1736.3 356.1 L1737.3 354.8 L1738.3 357.2 L1739.3 357.1 L1740.3 357.1 L1741.3 356.6 L1742.3 357.0 L1743.3 359.5 L1744.3 359.7 L1745.3 358.3 L1746.3 357.0 L1747.3 355.6 L1748.3 357.3 L1749.3 357.8 L1750.3 353.2 L1751.3 355.6 L1752.3 350.3 L1753.3 350.6 L1754.3 349.1 L1755.3 343.8 L1756.3 340.2 L1757.3 336.8 L1758.3 330.7 L1759.3 322.3 L1760.3 319.4 L1761.3 317.4 L1762.3 316.8 L1763.3 312.8 L1764.3 311.0 L1765.3 310.2 L1766.3 309.2 L1767.3 314.5 L1768.3 313.3 L1769.3 311.2 L1770.3 310.3 L1771.3 309.4 L1772.3 312.9 L1773.3 313.3 L1774.3 313.9 L1775.3 314.8 L1776.3 321.0 L1777.3 322.1 L1778.3 322.8 L1779.3 326.8 L1780.3 333.4 L1781.3 336.7 L1782.3 338.4 L1783.3 343.9 L1784.3 344.9 L1785.3 348.7 L1786.3 350.8 L1787.3 358.6 L1788.3 362.9 L1789.3 370.7 L1790.3 379.3 L1791.3 385.1 L1792.3 389.8 L1793.3 395.0 L1794.3 396.7 L1795.3 399.6 L1796.3 402.8 L1797.3 406.4 L1798.3 409.3 L1799.3 412.9 L1800.3 412.8 L1801.3 416.4 L1802.3 416.2 L1803.3 419.4 L1804.3 420.7 L1805.3 424.0 L1806.3 423.6 L1807.3 423.3 L1808.3 425.6 L1809.3 426.4 L1810.3 426.4 L1811.3 427.2 L1812.3 427.5 L1813.3 432.8 L1814.3 430.3 L1815.3 431.2 L1816.3 428.6 L1817.3 428.6 L1818.3 429.7 L1819.3 429.5 L1820.3 430.1 L1821.3 427.2 L1822.3 428.4 L1823.3 428.7 L1824.3 424.8 L1825.3 425.7 L1826.3 422.4 L1827.3 422.5 L1828.3 420.9 L1829.3 420.1 L1830.3 414.4 L1831.3 412.7 L1832.3 411.0 L1833.3 405.7 L1834.3 404.3 L1835.3 400.5 L1836.3 398.2 L1837.3 397.7 L1838.3 396.3 L1839.3 397.2 L1840.3 394.3 L1841.3 392.7 L1842.3 389.5 L1843.3 388.1 L1844.3 387.3 L1845.3 383.4 L1846.3 387.1 L1847.3 383.0 L1848.3 380.8 L1849.3 380.0 L1850.3 380.2 L1851.3 378.9 L1852.3 375.3 L1853.3 374.8 L1854.3 373.1 L1855.3 371.2 L1856.3 372.0 L1857.3 371.1 L1858.3 368.7 L1859.3 371.4 L1860.3 367.9 L1861.3 369.9" fill="none" stroke="#1ed7a2" stroke-width="2.5" stroke-linejoin="round"/><path d="M1547.3 442.5 H1861.8" stroke="#12b8d4" stroke-width="2.2"/><rect x="1492.0" y="510.0" width="14" height="4" rx="2" fill="#3480fa"/><text x="1510.8" y="514.9" font-size="11" fill="#666" text-anchor="start" letter-spacing="0.5">bond</text><rect x="1569.3" y="510.0" width="14" height="4" rx="2" fill="#1ed7a2"/><text x="1588.1" y="514.9" font-size="11" fill="#666" text-anchor="start" letter-spacing="0.5">ens24f0np0</text><rect x="1681.7" y="510.0" width="14" height="4" rx="2" fill="#12b8d4"/><text x="1700.5" y="514.9" font-size="11" fill="#666" text-anchor="start" letter-spacing="0.5">ens6f0np0</text><text x="254.5" y="554.9" font-size="12.5" fill="#505050" text-anchor="start" letter-spacing="0.28">NIC TX</text><text x="303.0" y="605.5" font-size="11" fill="#606060" text-anchor="end" letter-spacing="0.3">40 Gbps</text><path d="M308 602.7 H317" stroke="#f0f0f0" stroke-width="1"/><path d="M317 602.7 H631.5" stroke="#e3e3e3" stroke-width="1"/><text x="303.0" y="639.4" font-size="11" fill="#606060" text-anchor="end" letter-spacing="0.3">30 Gbps</text><path d="M308 636.6 H317" stroke="#f0f0f0" stroke-width="1"/><path d="M317 636.6 H631.5" stroke="#e3e3e3" stroke-width="1"/><text x="303.0" y="673.0" font-size="11" fill="#606060" text-anchor="end" letter-spacing="0.3">20 Gbps</text><path d="M308 670.2 H317" stroke="#f0f0f0" stroke-width="1"/><path d="M317 670.2 H631.5" stroke="#e3e3e3" stroke-width="1"/><text x="303.0" y="706.8" font-size="11" fill="#606060" text-anchor="end" letter-spacing="0.3">10 Gbps</text><path d="M308 704.0 H317" stroke="#f0f0f0" stroke-width="1"/><path d="M317 704.0 H631.5" stroke="#e3e3e3" stroke-width="1"/><text x="303.0" y="740.4" font-size="11" fill="#606060" text-anchor="end" letter-spacing="0.3">0 bps</text><path d="M308 737.6 H317" stroke="#f0f0f0" stroke-width="1"/><path d="M317 737.6 H631.5" stroke="#e3e3e3" stroke-width="1"/><path d="M350.5 583.2 V745" stroke="#e3e3e3" stroke-width="1"/><text x="350.6" y="752.9" font-size="11" fill="#606060" text-anchor="middle" letter-spacing="0.3">9-7</text><text x="350.6" y="769.9" font-size="11" fill="#606060" text-anchor="middle" letter-spacing="0.3">16:00</text><path d="M403.3 583.2 V745" stroke="#e3e3e3" stroke-width="1"/><text x="403.4" y="752.9" font-size="11" fill="#606060" text-anchor="middle" letter-spacing="0.3">9-8</text><text x="403.4" y="769.9" font-size="11" fill="#606060" text-anchor="middle" letter-spacing="0.3">00:00</text><path d="M455.4 583.2 V745" stroke="#e3e3e3" stroke-width="1"/><text x="455.5" y="752.9" font-size="11" fill="#606060" text-anchor="middle" letter-spacing="0.3">9-8</text><text x="455.5" y="769.9" font-size="11" fill="#606060" text-anchor="middle" letter-spacing="0.3">08:00</text><path d="M508.4 583.2 V745" stroke="#e3e3e3" stroke-width="1"/><text x="508.5" y="752.9" font-size="11" fill="#606060" text-anchor="middle" letter-spacing="0.3">9-8</text><text x="508.5" y="769.9" font-size="11" fill="#606060" text-anchor="middle" letter-spacing="0.3">16:00</text><path d="M560.5 583.2 V745" stroke="#e3e3e3" stroke-width="1"/><text x="560.6" y="752.9" font-size="11" fill="#606060" text-anchor="middle" letter-spacing="0.3">9-9</text><text x="560.6" y="769.9" font-size="11" fill="#606060" text-anchor="middle" letter-spacing="0.3">00:00</text><path d="M613.2 583.2 V745" stroke="#e3e3e3" stroke-width="1"/><text x="613.4" y="752.9" font-size="11" fill="#606060" text-anchor="middle" letter-spacing="0.3">9-9</text><text x="613.4" y="769.9" font-size="11" fill="#606060" text-anchor="middle" letter-spacing="0.3">08:00</text><path d="M316.0 696.6 L317.0 695.9 L318.0 696.0 L319.0 696.6 L320.0 696.8 L321.0 695.4 L322.0 694.5 L323.0 694.0 L324.0 694.6 L325.0 694.6 L326.0 693.3 L327.0 692.7 L328.0 692.9 L329.0 694.8 L330.0 693.4 L331.0 691.5 L332.0 692.2 L333.0 691.8 L334.0 691.9 L335.0 692.3 L336.0 692.1 L337.0 693.1 L338.0 693.1 L339.0 693.9 L340.0 694.7 L341.0 695.1 L342.0 694.0 L343.0 694.7 L344.0 694.6 L345.0 694.9 L346.0 694.5 L347.0 695.1 L348.0 694.9 L349.0 695.0 L350.0 694.6 L351.0 695.4 L352.0 695.0 L353.0 694.9 L354.0 695.7 L355.0 694.7 L356.0 696.1 L357.0 695.8 L358.0 693.5 L359.0 694.2 L360.0 693.2 L361.0 693.6 L362.0 693.2 L363.0 691.7 L364.0 691.4 L365.0 690.5 L366.0 690.5 L367.0 687.9 L368.0 686.8 L369.0 683.4 L370.0 681.9 L371.0 680.2 L372.0 680.2 L373.0 677.7 L374.0 677.1 L375.0 674.5 L376.0 674.4 L377.0 672.6 L378.0 670.4 L379.0 670.3 L380.0 670.1 L381.0 668.3 L382.0 668.3 L383.0 669.5 L384.0 669.2 L385.0 668.5 L386.0 668.3 L387.0 668.4 L388.0 670.6 L389.0 670.2 L390.0 673.0 L391.0 673.7 L392.0 675.6 L393.0 677.1 L394.0 680.6 L395.0 683.4 L396.0 684.3 L397.0 686.2 L398.0 689.8 L399.0 691.5 L400.0 694.2 L401.0 699.0 L402.0 700.6 L403.0 703.9 L404.0 706.5 L405.0 708.1 L406.0 710.2 L407.0 713.1 L408.0 713.5 L409.0 714.0 L410.0 714.8 L411.0 716.8 L412.0 717.9 L413.0 719.9 L414.0 720.3 L415.0 721.6 L416.0 722.1 L417.0 723.0 L418.0 724.3 L419.0 724.8 L420.0 725.8 L421.0 728.0 L422.0 727.4 L423.0 726.4 L424.0 728.8 L425.0 728.6 L426.0 728.2 L427.0 730.1 L428.0 729.4 L429.0 728.6 L430.0 728.9 L431.0 728.4 L432.0 729.6 L433.0 729.9 L434.0 729.3 L435.0 729.9 L436.0 730.1 L437.0 727.6 L438.0 728.1 L439.0 726.6 L440.0 725.5 L441.0 725.3 L442.0 724.7 L443.0 723.8 L444.0 721.9 L445.0 720.6 L446.0 719.6 L447.0 718.0 L448.0 717.1 L449.0 715.7 L450.0 714.4 L451.0 713.7 L452.0 711.1 L453.0 708.5 L454.0 706.9 L455.0 704.3 L456.0 707.8 L457.0 705.7 L458.0 704.0 L459.0 702.6 L460.0 700.6 L461.0 699.0 L462.0 700.3 L463.0 702.2 L464.0 699.1 L465.0 702.4 L466.0 703.6 L467.0 697.7 L468.0 695.1 L469.0 693.8 L470.0 693.9 L471.0 696.6 L472.0 692.9 L473.0 691.7 L474.0 690.6 L475.0 689.5 L476.0 689.3 L477.0 689.4 L478.0 691.4 L479.0 689.0 L480.0 688.4 L481.0 689.3 L482.0 688.5 L483.0 687.5 L484.0 686.0 L485.0 688.2 L486.0 691.7 L487.0 688.1 L488.0 688.8 L489.0 688.6 L490.0 686.8 L491.0 688.0 L492.0 692.6 L493.0 691.6 L494.0 691.3 L495.0 690.6 L496.0 690.1 L497.0 694.7 L498.0 694.5 L499.0 692.5 L500.0 692.4 L501.0 695.0 L502.0 692.8 L503.0 693.2 L504.0 693.4 L505.0 693.8 L506.0 693.9 L507.0 694.0 L508.0 693.4 L509.0 694.2 L510.0 694.1 L511.0 695.1 L512.0 694.0 L513.0 692.8 L514.0 692.6 L515.0 694.3 L516.0 692.6 L517.0 691.4 L518.0 692.3 L519.0 692.7 L520.0 693.1 L521.0 691.2 L522.0 690.6 L523.0 688.7 L524.0 686.0 L525.0 684.3 L526.0 683.8 L527.0 681.8 L528.0 678.8 L529.0 676.7 L530.0 675.2 L531.0 675.5 L532.0 673.5 L533.0 672.4 L534.0 672.4 L535.0 671.5 L536.0 672.6 L537.0 670.9 L538.0 671.8 L539.0 673.9 L540.0 672.0 L541.0 672.3 L542.0 670.8 L543.0 672.6 L544.0 673.3 L545.0 674.0 L546.0 674.7 L547.0 677.2 L548.0 678.2 L549.0 680.0 L550.0 682.7 L551.0 684.6 L552.0 686.9 L553.0 688.5 L554.0 690.2 L555.0 692.1 L556.0 694.6 L557.0 697.7 L558.0 699.5 L559.0 701.6 L560.0 702.6 L561.0 703.5 L562.0 706.0 L563.0 709.4 L564.0 711.2 L565.0 712.2 L566.0 713.0 L567.0 715.6 L568.0 716.5 L569.0 717.4 L570.0 719.0 L571.0 720.9 L572.0 722.8 L573.0 724.2 L574.0 724.9 L575.0 726.1 L576.0 726.7 L577.0 726.8 L578.0 727.4 L579.0 728.3 L580.0 728.2 L581.0 729.5 L582.0 730.3 L583.0 729.2 L584.0 728.7 L585.0 731.0 L586.0 730.4 L587.0 731.0 L588.0 729.6 L589.0 731.4 L590.0 731.2 L591.0 730.0 L592.0 729.4 L593.0 729.1 L594.0 728.6 L595.0 728.2 L596.0 727.4 L597.0 728.8 L598.0 726.9 L599.0 725.8 L600.0 725.1 L601.0 722.1 L602.0 721.9 L603.0 720.5 L604.0 719.8 L605.0 718.6 L606.0 717.0 L607.0 717.0 L608.0 714.6 L609.0 713.8 L610.0 713.6 L611.0 713.6 L612.0 712.8 L613.0 711.0 L614.0 709.9 L615.0 710.9 L616.0 709.1 L617.0 709.7 L618.0 708.6 L619.0 707.7 L620.0 707.1 L621.0 706.9 L622.0 706.8 L623.0 705.1 L624.0 704.3 L625.0 703.3 L626.0 700.9 L627.0 699.2 L628.0 699.0 L629.0 699.5 L630.0 700.2" fill="none" stroke="#1ed7a2" stroke-width="2.2" stroke-linejoin="round"/><path d="M316.0 696.2 L317.0 695.5 L318.0 695.6 L319.0 696.2 L320.0 696.4 L321.0 695.0 L322.0 694.1 L323.0 693.6 L324.0 694.2 L325.0 694.2 L326.0 692.9 L327.0 692.3 L328.0 692.5 L329.0 694.4 L330.0 693.0 L331.0 691.1 L332.0 691.8 L333.0 691.4 L334.0 691.5 L335.0 691.9 L336.0 691.7 L337.0 692.7 L338.0 692.7 L339.0 693.5 L340.0 694.3 L341.0 694.7 L342.0 693.6 L343.0 694.3 L344.0 694.2 L345.0 694.5 L346.0 694.1 L347.0 694.7 L348.0 694.5 L349.0 694.6 L350.0 694.2 L351.0 695.0 L352.0 694.6 L353.0 694.5 L354.0 695.3 L355.0 694.3 L356.0 695.7 L357.0 695.4 L358.0 693.1 L359.0 693.8 L360.0 692.8 L361.0 693.2 L362.0 692.8 L363.0 691.3 L364.0 691.0 L365.0 690.1 L366.0 690.1 L367.0 687.5 L368.0 686.4 L369.0 683.0 L370.0 681.5 L371.0 679.8 L372.0 679.8 L373.0 677.3 L374.0 676.7 L375.0 674.1 L376.0 674.0 L377.0 672.2 L378.0 670.0 L379.0 669.9 L380.0 669.7 L381.0 667.9 L382.0 667.9 L383.0 669.1 L384.0 668.8 L385.0 668.1 L386.0 667.9 L387.0 668.0 L388.0 670.2 L389.0 669.8 L390.0 672.6 L391.0 673.3 L392.0 675.2 L393.0 676.7 L394.0 680.2 L395.0 683.0 L396.0 683.9 L397.0 685.8 L398.0 689.4 L399.0 691.1 L400.0 693.8 L401.0 698.6 L402.0 700.2 L403.0 703.5 L404.0 706.1 L405.0 707.7 L406.0 709.8 L407.0 712.7 L408.0 713.1 L409.0 713.6 L410.0 714.4 L411.0 716.4 L412.0 717.5 L413.0 719.5 L414.0 719.9 L415.0 721.2 L416.0 721.7 L417.0 722.6 L418.0 723.9 L419.0 724.4 L420.0 725.4 L421.0 727.6 L422.0 727.0 L423.0 726.0 L424.0 728.4 L425.0 728.2 L426.0 727.8 L427.0 729.7 L428.0 729.0 L429.0 728.2 L430.0 728.5 L431.0 728.0 L432.0 729.2 L433.0 729.5 L434.0 728.9 L435.0 729.5 L436.0 729.7 L437.0 727.2 L438.0 727.7 L439.0 726.2 L440.0 725.1 L441.0 724.9 L442.0 724.3 L443.0 723.4 L444.0 721.5 L445.0 720.2 L446.0 719.2 L447.0 717.6 L448.0 716.7 L449.0 715.3 L450.0 714.0 L451.0 713.3 L452.0 710.7 L453.0 708.1 L454.0 706.5 L455.0 703.9 L456.0 707.4 L457.0 705.3 L458.0 703.6 L459.0 702.2 L460.0 700.2 L461.0 698.6 L462.0 699.9 L463.0 701.8 L464.0 698.7 L465.0 702.0 L466.0 703.2 L467.0 697.3 L468.0 694.7 L469.0 693.4 L470.0 693.5 L471.0 696.2 L472.0 692.5 L473.0 691.3 L474.0 690.2 L475.0 689.1 L476.0 688.9 L477.0 689.0 L478.0 691.0 L479.0 688.6 L480.0 688.0 L481.0 688.9 L482.0 688.1 L483.0 687.1 L484.0 685.6 L485.0 687.8 L486.0 691.3 L487.0 687.7 L488.0 688.4 L489.0 688.2 L490.0 686.4 L491.0 687.6 L492.0 692.2 L493.0 691.2 L494.0 690.9 L495.0 690.2 L496.0 689.7 L497.0 694.3 L498.0 694.1 L499.0 692.1 L500.0 692.0 L501.0 694.6 L502.0 692.4 L503.0 692.8 L504.0 693.0 L505.0 693.4 L506.0 693.5 L507.0 693.6 L508.0 693.0 L509.0 693.8 L510.0 693.7 L511.0 694.7 L512.0 693.6 L513.0 692.4 L514.0 692.2 L515.0 693.9 L516.0 692.2 L517.0 691.0 L518.0 691.9 L519.0 692.3 L520.0 692.7 L521.0 690.8 L522.0 690.2 L523.0 688.3 L524.0 685.6 L525.0 683.9 L526.0 683.4 L527.0 681.4 L528.0 678.4 L529.0 676.3 L530.0 674.8 L531.0 675.1 L532.0 673.1 L533.0 672.0 L534.0 672.0 L535.0 671.1 L536.0 672.2 L537.0 670.5 L538.0 671.4 L539.0 673.5 L540.0 671.6 L541.0 671.9 L542.0 670.4 L543.0 672.2 L544.0 672.9 L545.0 673.6 L546.0 674.3 L547.0 676.8 L548.0 677.8 L549.0 679.6 L550.0 682.3 L551.0 684.2 L552.0 686.5 L553.0 688.1 L554.0 689.8 L555.0 691.7 L556.0 694.2 L557.0 697.3 L558.0 699.1 L559.0 701.2 L560.0 702.2 L561.0 703.1 L562.0 705.6 L563.0 709.0 L564.0 710.8 L565.0 711.8 L566.0 712.6 L567.0 715.2 L568.0 716.1 L569.0 717.0 L570.0 718.6 L571.0 720.5 L572.0 722.4 L573.0 723.8 L574.0 724.5 L575.0 725.7 L576.0 726.3 L577.0 726.4 L578.0 727.0 L579.0 727.9 L580.0 727.8 L581.0 729.1 L582.0 729.9 L583.0 728.8 L584.0 728.3 L585.0 730.6 L586.0 730.0 L587.0 730.6 L588.0 729.2 L589.0 731.0 L590.0 730.8 L591.0 729.6 L592.0 729.0 L593.0 728.7 L594.0 728.2 L595.0 727.8 L596.0 727.0 L597.0 728.4 L598.0 726.5 L599.0 725.4 L600.0 724.7 L601.0 721.7 L602.0 721.5 L603.0 720.1 L604.0 719.4 L605.0 718.2 L606.0 716.6 L607.0 716.6 L608.0 714.2 L609.0 713.4 L610.0 713.2 L611.0 713.2 L612.0 712.4 L613.0 710.6 L614.0 709.5 L615.0 710.5 L616.0 708.7 L617.0 709.3 L618.0 708.2 L619.0 707.3 L620.0 706.7 L621.0 706.5 L622.0 706.4 L623.0 704.7 L624.0 703.9 L625.0 702.9 L626.0 700.5 L627.0 698.8 L628.0 698.6 L629.0 699.1 L630.0 699.8" fill="none" stroke="#14bfcc" stroke-width="2.4" stroke-linejoin="round"/><path d="M316.0 655.5 L317.0 653.8 L318.0 654.3 L319.0 654.5 L320.0 654.6 L321.0 652.3 L322.0 650.5 L323.0 649.5 L324.0 651.1 L325.0 651.7 L326.0 649.3 L327.0 646.6 L328.0 646.7 L329.0 649.6 L330.0 647.4 L331.0 644.4 L332.0 646.0 L333.0 644.6 L334.0 645.1 L335.0 645.4 L336.0 645.7 L337.0 648.1 L338.0 648.2 L339.0 648.4 L340.0 650.7 L341.0 651.9 L342.0 649.3 L343.0 651.2 L344.0 650.7 L345.0 651.9 L346.0 650.8 L347.0 652.7 L348.0 652.9 L349.0 652.5 L350.0 651.7 L351.0 652.4 L352.0 651.5 L353.0 651.1 L354.0 652.8 L355.0 651.2 L356.0 653.7 L357.0 652.6 L358.0 648.6 L359.0 650.7 L360.0 648.7 L361.0 649.3 L362.0 648.1 L363.0 644.3 L364.0 644.9 L365.0 643.5 L366.0 642.8 L367.0 637.1 L368.0 635.5 L369.0 629.2 L370.0 626.1 L371.0 622.2 L372.0 621.7 L373.0 617.4 L374.0 616.3 L375.0 610.9 L376.0 610.3 L377.0 606.8 L378.0 602.7 L379.0 601.1 L380.0 601.3 L381.0 598.5 L382.0 598.9 L383.0 601.0 L384.0 600.0 L385.0 598.3 L386.0 598.0 L387.0 598.4 L388.0 603.8 L389.0 603.0 L390.0 608.4 L391.0 609.1 L392.0 612.8 L393.0 616.6 L394.0 623.0 L395.0 627.8 L396.0 629.8 L397.0 634.3 L398.0 641.1 L399.0 644.3 L400.0 649.8 L401.0 658.7 L402.0 663.0 L403.0 669.6 L404.0 674.4 L405.0 677.7 L406.0 681.8 L407.0 686.7 L408.0 687.2 L409.0 688.7 L410.0 690.5 L411.0 695.2 L412.0 697.6 L413.0 700.6 L414.0 701.9 L415.0 703.8 L416.0 705.4 L417.0 707.5 L418.0 710.0 L419.0 710.8 L420.0 712.9 L421.0 716.5 L422.0 715.8 L423.0 714.3 L424.0 719.4 L425.0 718.6 L426.0 717.6 L427.0 720.5 L428.0 719.8 L429.0 719.2 L430.0 719.3 L431.0 719.2 L432.0 720.9 L433.0 722.3 L434.0 720.4 L435.0 720.9 L436.0 721.9 L437.0 717.1 L438.0 717.6 L439.0 715.8 L440.0 713.5 L441.0 711.9 L442.0 711.1 L443.0 709.1 L444.0 704.9 L445.0 702.7 L446.0 700.6 L447.0 697.4 L448.0 695.4 L449.0 692.1 L450.0 689.5 L451.0 688.4 L452.0 683.2 L453.0 679.0 L454.0 676.1 L455.0 670.7 L456.0 676.5 L457.0 671.9 L458.0 669.7 L459.0 668.0 L460.0 663.4 L461.0 659.4 L462.0 662.0 L463.0 665.7 L464.0 659.0 L465.0 666.0 L466.0 669.3 L467.0 657.2 L468.0 652.0 L469.0 648.9 L470.0 648.2 L471.0 653.3 L472.0 646.8 L473.0 645.3 L474.0 643.1 L475.0 640.6 L476.0 640.6 L477.0 640.5 L478.0 643.8 L479.0 638.9 L480.0 638.4 L481.0 639.8 L482.0 637.7 L483.0 636.5 L484.0 634.5 L485.0 638.2 L486.0 644.9 L487.0 638.0 L488.0 639.5 L489.0 639.5 L490.0 634.7 L491.0 637.2 L492.0 647.0 L493.0 644.8 L494.0 644.2 L495.0 643.9 L496.0 644.0 L497.0 652.8 L498.0 650.3 L499.0 646.9 L500.0 646.7 L501.0 651.5 L502.0 647.1 L503.0 647.5 L504.0 648.6 L505.0 649.5 L506.0 650.3 L507.0 649.5 L508.0 647.9 L509.0 649.6 L510.0 649.6 L511.0 651.5 L512.0 648.8 L513.0 646.7 L514.0 647.0 L515.0 650.0 L516.0 647.1 L517.0 644.6 L518.0 646.1 L519.0 646.8 L520.0 647.8 L521.0 644.0 L522.0 643.2 L523.0 639.5 L524.0 633.1 L525.0 629.5 L526.0 628.6 L527.0 624.7 L528.0 619.5 L529.0 614.9 L530.0 612.3 L531.0 612.7 L532.0 608.5 L533.0 606.1 L534.0 605.9 L535.0 604.7 L536.0 607.1 L537.0 602.8 L538.0 604.1 L539.0 608.5 L540.0 605.2 L541.0 607.0 L542.0 603.6 L543.0 607.3 L544.0 609.3 L545.0 609.9 L546.0 611.4 L547.0 617.0 L548.0 618.8 L549.0 621.6 L550.0 626.6 L551.0 630.6 L552.0 636.0 L553.0 639.6 L554.0 642.5 L555.0 646.1 L556.0 651.2 L557.0 657.1 L558.0 660.0 L559.0 664.2 L560.0 666.9 L561.0 669.2 L562.0 674.1 L563.0 680.0 L564.0 683.2 L565.0 685.5 L566.0 688.1 L567.0 693.6 L568.0 696.1 L569.0 698.6 L570.0 701.1 L571.0 704.3 L572.0 706.7 L573.0 709.7 L574.0 711.6 L575.0 713.7 L576.0 714.3 L577.0 713.9 L578.0 715.3 L579.0 717.1 L580.0 717.2 L581.0 719.3 L582.0 721.0 L583.0 719.1 L584.0 718.5 L585.0 722.9 L586.0 722.2 L587.0 723.0 L588.0 720.7 L589.0 724.4 L590.0 723.1 L591.0 721.4 L592.0 720.5 L593.0 720.5 L594.0 719.5 L595.0 718.5 L596.0 716.8 L597.0 718.9 L598.0 715.9 L599.0 713.9 L600.0 711.3 L601.0 705.7 L602.0 706.7 L603.0 703.3 L604.0 700.9 L605.0 699.2 L606.0 696.0 L607.0 696.2 L608.0 692.3 L609.0 689.9 L610.0 688.2 L611.0 687.9 L612.0 687.0 L613.0 683.6 L614.0 681.1 L615.0 683.1 L616.0 679.6 L617.0 681.3 L618.0 678.7 L619.0 676.7 L620.0 675.7 L621.0 675.9 L622.0 675.0 L623.0 671.5 L624.0 670.4 L625.0 669.3 L626.0 664.1 L627.0 661.4 L628.0 661.3 L629.0 661.0 L630.0 662.0" fill="none" stroke="#3480fa" stroke-width="2.5" stroke-linejoin="round"/><rect x="261.3" y="803.5" width="14" height="4" rx="2" fill="#3480fa"/><text x="280.1" y="808.4" font-size="11" fill="#666" text-anchor="start" letter-spacing="0.5">bond</text><rect x="338.2" y="803.5" width="14" height="4" rx="2" fill="#1ed7a2"/><text x="357.0" y="808.4" font-size="11" fill="#666" text-anchor="start" letter-spacing="0.5">ens24f0np0</text><rect x="451.5" y="803.5" width="14" height="4" rx="2" fill="#12b8d4"/><text x="470.3" y="808.4" font-size="11" fill="#666" text-anchor="start" letter-spacing="0.5">ens6f0np0</text><text x="664.7" y="554.9" font-size="12.5" fill="#505050" text-anchor="start" letter-spacing="0.232">NIC RX Drops</text><text x="727.0" y="599.1" font-size="11" fill="#606060" text-anchor="end" letter-spacing="0.3">24.58 Kpps</text><path d="M732.3 596.3 H741.3" stroke="#f0f0f0" stroke-width="1"/><path d="M741.3 596.3 H1040.9" stroke="#e3e3e3" stroke-width="1"/><text x="727.0" y="646.1" font-size="11" fill="#606060" text-anchor="end" letter-spacing="0.3">16.38 Kpps</text><path d="M732.3 643.3 H741.3" stroke="#f0f0f0" stroke-width="1"/><path d="M741.3 643.3 H1040.9" stroke="#e3e3e3" stroke-width="1"/><text x="727.0" y="692.6" font-size="11" fill="#606060" text-anchor="end" letter-spacing="0.3">8.19 Kpps</text><path d="M732.3 689.8 H741.3" stroke="#f0f0f0" stroke-width="1"/><path d="M741.3 689.8 H1040.9" stroke="#e3e3e3" stroke-width="1"/><text x="727.0" y="740.1" font-size="11" fill="#606060" text-anchor="end" letter-spacing="0.3">0 pps</text><path d="M732.3 737.3 H741.3" stroke="#f0f0f0" stroke-width="1"/><path d="M741.3 737.3 H1040.9" stroke="#e3e3e3" stroke-width="1"/><path d="M773.5 583.2 V745" stroke="#e3e3e3" stroke-width="1"/><text x="773.6" y="752.9" font-size="11" fill="#606060" text-anchor="middle" letter-spacing="0.3">9-7</text><text x="773.6" y="769.9" font-size="11" fill="#606060" text-anchor="middle" letter-spacing="0.3">16:00</text><path d="M823.4 583.2 V745" stroke="#e3e3e3" stroke-width="1"/><text x="823.5" y="752.9" font-size="11" fill="#606060" text-anchor="middle" letter-spacing="0.3">9-8</text><text x="823.5" y="769.9" font-size="11" fill="#606060" text-anchor="middle" letter-spacing="0.3">00:00</text><path d="M873.2 583.2 V745" stroke="#e3e3e3" stroke-width="1"/><text x="873.4" y="752.9" font-size="11" fill="#606060" text-anchor="middle" letter-spacing="0.3">9-8</text><text x="873.4" y="769.9" font-size="11" fill="#606060" text-anchor="middle" letter-spacing="0.3">08:00</text><path d="M923.4 583.2 V745" stroke="#e3e3e3" stroke-width="1"/><text x="923.5" y="752.9" font-size="11" fill="#606060" text-anchor="middle" letter-spacing="0.3">9-8</text><text x="923.5" y="769.9" font-size="11" fill="#606060" text-anchor="middle" letter-spacing="0.3">16:00</text><path d="M974.1 583.2 V745" stroke="#e3e3e3" stroke-width="1"/><text x="974.2" y="752.9" font-size="11" fill="#606060" text-anchor="middle" letter-spacing="0.3">9-9</text><text x="974.2" y="769.9" font-size="11" fill="#606060" text-anchor="middle" letter-spacing="0.3">00:00</text><path d="M1024.5 583.2 V745" stroke="#e3e3e3" stroke-width="1"/><text x="1024.7" y="752.9" font-size="11" fill="#606060" text-anchor="middle" letter-spacing="0.3">9-9</text><text x="1024.7" y="769.9" font-size="11" fill="#606060" text-anchor="middle" letter-spacing="0.3">08:00</text><path d="M896.6 737.3 L897.4 601 L898.6 601.5 L899.2 737.3 Z" fill="#1ed7a2" stroke="#1ed7a2" stroke-width="1.2" stroke-linejoin="round"/><path d="M740.8 735.8 L742 736.8 H802 L803 735.6 L804 736.8 H1040.9" fill="none" stroke="#12b8d4" stroke-width="2.2"/><rect x="672.0" y="803.5" width="14" height="4" rx="2" fill="#3480fa"/><text x="690.8" y="808.4" font-size="11" fill="#666" text-anchor="start" letter-spacing="0.5">bond</text><rect x="748.1" y="803.5" width="14" height="4" rx="2" fill="#1ed7a2"/><text x="766.9" y="808.4" font-size="11" fill="#666" text-anchor="start" letter-spacing="0.5">ens24f0np0</text><rect x="861.1" y="803.5" width="14" height="4" rx="2" fill="#12b8d4"/><text x="879.9" y="808.4" font-size="11" fill="#666" text-anchor="start" letter-spacing="0.5">ens6f0np0</text><text x="1075.0" y="554.9" font-size="12.5" fill="#505050" text-anchor="start" letter-spacing="0.147">NIC RX Errors</text><text x="1116.1" y="592.6" font-size="11" fill="#606060" text-anchor="end" letter-spacing="0.3">96 pps</text><path d="M1120.6 589.8 H1129.6" stroke="#f0f0f0" stroke-width="1"/><path d="M1129.6 589.8 H1451.7" stroke="#e3e3e3" stroke-width="1"/><text x="1116.1" y="641.6" font-size="11" fill="#606060" text-anchor="end" letter-spacing="0.3">64 pps</text><path d="M1120.6 638.8 H1129.6" stroke="#f0f0f0" stroke-width="1"/><path d="M1129.6 638.8 H1451.7" stroke="#e3e3e3" stroke-width="1"/><text x="1116.1" y="690.7" font-size="11" fill="#606060" text-anchor="end" letter-spacing="0.3">32 pps</text><path d="M1120.6 687.9 H1129.6" stroke="#f0f0f0" stroke-width="1"/><path d="M1129.6 687.9 H1451.7" stroke="#e3e3e3" stroke-width="1"/><text x="1116.1" y="739.8" font-size="11" fill="#606060" text-anchor="end" letter-spacing="0.3">0 pps</text><path d="M1120.6 737.0 H1129.6" stroke="#f0f0f0" stroke-width="1"/><path d="M1129.6 737.0 H1451.7" stroke="#e3e3e3" stroke-width="1"/><path d="M1164.3 583.2 V745" stroke="#e3e3e3" stroke-width="1"/><text x="1164.5" y="752.9" font-size="11" fill="#606060" text-anchor="middle" letter-spacing="0.3">9-7</text><text x="1164.5" y="769.9" font-size="11" fill="#606060" text-anchor="middle" letter-spacing="0.3">16:00</text><path d="M1218.0 583.2 V745" stroke="#e3e3e3" stroke-width="1"/><text x="1218.2" y="752.9" font-size="11" fill="#606060" text-anchor="middle" letter-spacing="0.3">9-8</text><text x="1218.2" y="769.9" font-size="11" fill="#606060" text-anchor="middle" letter-spacing="0.3">00:00</text><path d="M1271.9 583.2 V745" stroke="#e3e3e3" stroke-width="1"/><text x="1272.1" y="752.9" font-size="11" fill="#606060" text-anchor="middle" letter-spacing="0.3">9-8</text><text x="1272.1" y="769.9" font-size="11" fill="#606060" text-anchor="middle" letter-spacing="0.3">08:00</text><path d="M1325.4 583.2 V745" stroke="#e3e3e3" stroke-width="1"/><text x="1325.6" y="752.9" font-size="11" fill="#606060" text-anchor="middle" letter-spacing="0.3">9-8</text><text x="1325.6" y="769.9" font-size="11" fill="#606060" text-anchor="middle" letter-spacing="0.3">16:00</text><path d="M1378.4 583.2 V745" stroke="#e3e3e3" stroke-width="1"/><text x="1378.6" y="752.9" font-size="11" fill="#606060" text-anchor="middle" letter-spacing="0.3">9-9</text><text x="1378.6" y="769.9" font-size="11" fill="#606060" text-anchor="middle" letter-spacing="0.3">00:00</text><path d="M1432.2 583.2 V745" stroke="#e3e3e3" stroke-width="1"/><text x="1432.4" y="752.9" font-size="11" fill="#606060" text-anchor="middle" letter-spacing="0.3">9-9</text><text x="1432.4" y="769.9" font-size="11" fill="#606060" text-anchor="middle" letter-spacing="0.3">08:00</text><path d="M1129 737.3 H1451.5" stroke="#12b8d4" stroke-width="2"/><rect x="1081.7" y="803.5" width="14" height="4" rx="2" fill="#3480fa"/><text x="1100.5" y="808.4" font-size="11" fill="#666" text-anchor="start" letter-spacing="0.5">bond</text><rect x="1158.9" y="803.5" width="14" height="4" rx="2" fill="#1ed7a2"/><text x="1177.7" y="808.4" font-size="11" fill="#666" text-anchor="start" letter-spacing="0.5">ens24f0np0</text><rect x="1271.6" y="803.5" width="14" height="4" rx="2" fill="#12b8d4"/><text x="1290.4" y="808.4" font-size="11" fill="#666" text-anchor="start" letter-spacing="0.5">ens6f0np0</text><text x="1487.0" y="554.9" font-size="12.5" fill="#505050" text-anchor="start" letter-spacing="0.358">Traffic (Rx)</text><text x="1534.3" y="598.2" font-size="11" fill="#606060" text-anchor="end" letter-spacing="0.3">40 Gbps</text><path d="M1539 595.4 H1548" stroke="#f0f0f0" stroke-width="1"/><path d="M1548 595.4 H1862.3" stroke="#e3e3e3" stroke-width="1"/><text x="1534.3" y="628.3" font-size="11" fill="#606060" text-anchor="end" letter-spacing="0.3">30 Gbps</text><path d="M1539 625.5 H1548" stroke="#f0f0f0" stroke-width="1"/><path d="M1548 625.5 H1862.3" stroke="#e3e3e3" stroke-width="1"/><text x="1534.3" y="659.3" font-size="11" fill="#606060" text-anchor="end" letter-spacing="0.3">20 Gbps</text><path d="M1539 656.5 H1548" stroke="#f0f0f0" stroke-width="1"/><path d="M1548 656.5 H1862.3" stroke="#e3e3e3" stroke-width="1"/><text x="1534.3" y="690.6" font-size="11" fill="#606060" text-anchor="end" letter-spacing="0.3">10 Gbps</text><path d="M1539 687.8 H1548" stroke="#f0f0f0" stroke-width="1"/><path d="M1548 687.8 H1862.3" stroke="#e3e3e3" stroke-width="1"/><text x="1534.3" y="721.0" font-size="11" fill="#606060" text-anchor="end" letter-spacing="0.3">0 bps</text><path d="M1539 718.2 H1548" stroke="#f0f0f0" stroke-width="1"/><path d="M1548 718.2 H1862.3" stroke="#e3e3e3" stroke-width="1"/><path d="M1581.5 583.2 V727" stroke="#e3e3e3" stroke-width="1"/><text x="1581.7" y="735.0" font-size="11" fill="#606060" text-anchor="middle" letter-spacing="0.3">9-7</text><text x="1581.7" y="751.9" font-size="11" fill="#606060" text-anchor="middle" letter-spacing="0.3">16:00</text><path d="M1634.7 583.2 V727" stroke="#e3e3e3" stroke-width="1"/><text x="1634.9" y="735.0" font-size="11" fill="#606060" text-anchor="middle" letter-spacing="0.3">9-8</text><text x="1634.9" y="751.9" font-size="11" fill="#606060" text-anchor="middle" letter-spacing="0.3">00:00</text><path d="M1686.6 583.2 V727" stroke="#e3e3e3" stroke-width="1"/><text x="1686.8" y="735.0" font-size="11" fill="#606060" text-anchor="middle" letter-spacing="0.3">9-8</text><text x="1686.8" y="751.9" font-size="11" fill="#606060" text-anchor="middle" letter-spacing="0.3">08:00</text><path d="M1739.5 583.2 V727" stroke="#e3e3e3" stroke-width="1"/><text x="1739.7" y="735.0" font-size="11" fill="#606060" text-anchor="middle" letter-spacing="0.3">9-8</text><text x="1739.7" y="751.9" font-size="11" fill="#606060" text-anchor="middle" letter-spacing="0.3">16:00</text><path d="M1791.3 583.2 V727" stroke="#e3e3e3" stroke-width="1"/><text x="1791.5" y="735.0" font-size="11" fill="#606060" text-anchor="middle" letter-spacing="0.3">9-9</text><text x="1791.5" y="751.9" font-size="11" fill="#606060" text-anchor="middle" letter-spacing="0.3">00:00</text><path d="M1844.5 583.2 V727" stroke="#e3e3e3" stroke-width="1"/><text x="1844.7" y="735.0" font-size="11" fill="#606060" text-anchor="middle" letter-spacing="0.3">9-9</text><text x="1844.7" y="751.9" font-size="11" fill="#606060" text-anchor="middle" letter-spacing="0.3">08:00</text><path d="M1546.6 651.6 L1547.6 651.3 L1548.6 644.9 L1549.6 647.1 L1550.6 648.3 L1551.6 648.1 L1552.6 646.6 L1553.6 646.9 L1554.6 644.7 L1555.6 644.3 L1556.6 643.0 L1557.6 640.6 L1558.6 640.3 L1559.6 641.3 L1560.6 639.9 L1561.6 642.0 L1562.6 642.1 L1563.6 642.6 L1564.6 640.4 L1565.6 642.1 L1566.6 639.5 L1567.6 639.8 L1568.6 641.5 L1569.6 642.1 L1570.6 640.0 L1571.6 640.4 L1572.6 643.8 L1573.6 643.6 L1574.6 647.2 L1575.6 647.2 L1576.6 647.4 L1577.6 647.4 L1578.6 648.1 L1579.6 646.6 L1580.6 647.7 L1581.6 645.3 L1582.6 645.0 L1583.6 644.1 L1584.6 645.3 L1585.6 644.1 L1586.6 642.7 L1587.6 645.8 L1588.6 642.3 L1589.6 641.9 L1590.6 642.1 L1591.6 643.1 L1592.6 639.9 L1593.6 639.8 L1594.6 637.8 L1595.6 634.3 L1596.6 635.4 L1597.6 633.6 L1598.6 629.5 L1599.6 626.9 L1600.6 621.2 L1601.6 616.2 L1602.6 612.9 L1603.6 610.4 L1604.6 606.6 L1605.6 608.9 L1606.6 606.5 L1607.6 604.0 L1608.6 603.6 L1609.6 603.7 L1610.6 599.3 L1611.6 600.3 L1612.6 596.3 L1613.6 598.3 L1614.6 600.8 L1615.6 597.8 L1616.6 597.0 L1617.6 598.9 L1618.6 600.1 L1619.6 602.8 L1620.6 604.2 L1621.6 611.0 L1622.6 610.3 L1623.6 613.7 L1624.6 616.6 L1625.6 621.5 L1626.6 621.3 L1627.6 626.3 L1628.6 632.9 L1629.6 636.0 L1630.6 641.1 L1631.6 648.5 L1632.6 652.6 L1633.6 658.1 L1634.6 659.9 L1635.6 665.0 L1636.6 669.3 L1637.6 673.0 L1638.6 673.8 L1639.6 679.8 L1640.6 679.6 L1641.6 680.9 L1642.6 683.8 L1643.6 687.1 L1644.6 688.4 L1645.6 691.0 L1646.6 692.6 L1647.6 693.6 L1648.6 694.3 L1649.6 697.8 L1650.6 693.6 L1651.6 695.0 L1652.6 697.7 L1653.6 697.7 L1654.6 696.9 L1655.6 700.0 L1656.6 700.8 L1657.6 699.5 L1658.6 704.3 L1659.6 705.7 L1660.6 705.8 L1661.6 703.8 L1662.6 704.6 L1663.6 703.2 L1664.6 704.8 L1665.6 703.6 L1666.6 704.2 L1667.6 702.7 L1668.6 703.4 L1669.6 702.3 L1670.6 701.3 L1671.6 695.7 L1672.6 693.4 L1673.6 694.1 L1674.6 690.8 L1675.6 689.7 L1676.6 687.3 L1677.6 684.7 L1678.6 683.0 L1679.6 680.0 L1680.6 677.2 L1681.6 673.3 L1682.6 674.4 L1683.6 670.5 L1684.6 669.2 L1685.6 666.0 L1686.6 664.8 L1687.6 661.3 L1688.6 663.4 L1689.6 659.0 L1690.6 655.8 L1691.6 653.9 L1692.6 652.5 L1693.6 656.5 L1694.6 651.2 L1695.6 659.8 L1696.6 661.8 L1697.6 652.8 L1698.6 650.6 L1699.6 645.7 L1700.6 646.0 L1701.6 649.9 L1702.6 644.1 L1703.6 640.2 L1704.6 638.2 L1705.6 638.0 L1706.6 637.1 L1707.6 633.1 L1708.6 635.3 L1709.6 642.8 L1710.6 640.8 L1711.6 639.6 L1712.6 637.6 L1713.6 636.7 L1714.6 635.7 L1715.6 641.1 L1716.6 638.8 L1717.6 634.1 L1718.6 633.3 L1719.6 634.4 L1720.6 639.7 L1721.6 639.4 L1722.6 640.2 L1723.6 640.1 L1724.6 639.3 L1725.6 640.7 L1726.6 641.9 L1727.6 641.2 L1728.6 643.1 L1729.6 642.4 L1730.6 641.2 L1731.6 643.4 L1732.6 640.0 L1733.6 643.0 L1734.6 644.1 L1735.6 641.6 L1736.6 641.9 L1737.6 643.7 L1738.6 644.7 L1739.6 643.7 L1740.6 643.8 L1741.6 644.9 L1742.6 644.2 L1743.6 642.5 L1744.6 643.9 L1745.6 644.1 L1746.6 642.3 L1747.6 644.0 L1748.6 641.9 L1749.6 642.4 L1750.6 638.2 L1751.6 637.2 L1752.6 634.8 L1753.6 635.6 L1754.6 632.5 L1755.6 629.2 L1756.6 625.7 L1757.6 621.9 L1758.6 618.6 L1759.6 612.4 L1760.6 614.6 L1761.6 610.2 L1762.6 608.4 L1763.6 606.1 L1764.6 608.1 L1765.6 607.6 L1766.6 603.6 L1767.6 605.6 L1768.6 604.8 L1769.6 603.4 L1770.6 604.3 L1771.6 603.8 L1772.6 602.2 L1773.6 606.0 L1774.6 608.7 L1775.6 609.6 L1776.6 610.9 L1777.6 611.3 L1778.6 614.7 L1779.6 618.5 L1780.6 621.9 L1781.6 622.6 L1782.6 625.2 L1783.6 631.1 L1784.6 633.1 L1785.6 635.8 L1786.6 639.4 L1787.6 644.2 L1788.6 652.0 L1789.6 656.0 L1790.6 658.6 L1791.6 661.9 L1792.6 670.3 L1793.6 674.8 L1794.6 678.5 L1795.6 681.4 L1796.6 680.8 L1797.6 684.1 L1798.6 688.9 L1799.6 690.1 L1800.6 692.5 L1801.6 693.1 L1802.6 694.4 L1803.6 697.2 L1804.6 697.4 L1805.6 699.0 L1806.6 700.5 L1807.6 701.5 L1808.6 703.7 L1809.6 704.5 L1810.6 701.5 L1811.6 703.1 L1812.6 703.4 L1813.6 705.5 L1814.6 703.8 L1815.6 706.5 L1816.6 706.9 L1817.6 706.7 L1818.6 704.8 L1819.6 705.6 L1820.6 704.4 L1821.6 706.0 L1822.6 706.1 L1823.6 702.1 L1824.6 702.0 L1825.6 702.1 L1826.6 701.0 L1827.6 702.2 L1828.6 698.6 L1829.6 697.0 L1830.6 693.4 L1831.6 694.6 L1832.6 691.1 L1833.6 689.7 L1834.6 686.5 L1835.6 681.2 L1836.6 679.6 L1837.6 678.2 L1838.6 678.8 L1839.6 676.5 L1840.6 676.5 L1841.6 675.3 L1842.6 674.4 L1843.6 674.4 L1844.6 672.3 L1845.6 669.0 L1846.6 669.4 L1847.6 671.3 L1848.6 667.0 L1849.6 668.9 L1850.6 668.1 L1851.6 664.0 L1852.6 663.6 L1853.6 660.3 L1854.6 661.6 L1855.6 658.1 L1856.6 655.5 L1857.6 655.3 L1858.6 654.7 L1859.6 654.6 L1860.6 655.6 L1861.6 655.2" fill="none" stroke="#3480fa" stroke-width="1.3" stroke-linejoin="round"/><path d="M1546.6 650.7 L1547.6 650.4 L1548.6 644.0 L1549.6 646.2 L1550.6 647.4 L1551.6 647.2 L1552.6 645.7 L1553.6 646.0 L1554.6 643.8 L1555.6 643.4 L1556.6 642.1 L1557.6 639.7 L1558.6 639.4 L1559.6 640.4 L1560.6 639.0 L1561.6 641.1 L1562.6 641.2 L1563.6 641.7 L1564.6 639.5 L1565.6 641.2 L1566.6 638.6 L1567.6 638.9 L1568.6 640.6 L1569.6 641.2 L1570.6 639.1 L1571.6 639.5 L1572.6 642.9 L1573.6 642.7 L1574.6 646.3 L1575.6 646.3 L1576.6 646.5 L1577.6 646.5 L1578.6 647.2 L1579.6 645.7 L1580.6 646.8 L1581.6 644.4 L1582.6 644.1 L1583.6 643.2 L1584.6 644.4 L1585.6 643.2 L1586.6 641.8 L1587.6 644.9 L1588.6 641.4 L1589.6 641.0 L1590.6 641.2 L1591.6 642.2 L1592.6 639.0 L1593.6 638.9 L1594.6 636.9 L1595.6 633.4 L1596.6 634.5 L1597.6 632.7 L1598.6 628.6 L1599.6 626.0 L1600.6 620.3 L1601.6 615.3 L1602.6 612.0 L1603.6 609.5 L1604.6 605.7 L1605.6 608.0 L1606.6 605.6 L1607.6 603.1 L1608.6 602.7 L1609.6 602.8 L1610.6 598.4 L1611.6 599.4 L1612.6 595.4 L1613.6 597.4 L1614.6 599.9 L1615.6 596.9 L1616.6 596.1 L1617.6 598.0 L1618.6 599.2 L1619.6 601.9 L1620.6 603.3 L1621.6 610.1 L1622.6 609.4 L1623.6 612.8 L1624.6 615.7 L1625.6 620.6 L1626.6 620.4 L1627.6 625.4 L1628.6 632.0 L1629.6 635.1 L1630.6 640.2 L1631.6 647.6 L1632.6 651.7 L1633.6 657.2 L1634.6 659.0 L1635.6 664.1 L1636.6 668.4 L1637.6 672.1 L1638.6 672.9 L1639.6 678.9 L1640.6 678.7 L1641.6 680.0 L1642.6 682.9 L1643.6 686.2 L1644.6 687.5 L1645.6 690.1 L1646.6 691.7 L1647.6 692.7 L1648.6 693.4 L1649.6 696.9 L1650.6 692.7 L1651.6 694.1 L1652.6 696.8 L1653.6 696.8 L1654.6 696.0 L1655.6 699.1 L1656.6 699.9 L1657.6 698.6 L1658.6 703.4 L1659.6 704.8 L1660.6 704.9 L1661.6 702.9 L1662.6 703.7 L1663.6 702.3 L1664.6 703.9 L1665.6 702.7 L1666.6 703.3 L1667.6 701.8 L1668.6 702.5 L1669.6 701.4 L1670.6 700.4 L1671.6 694.8 L1672.6 692.5 L1673.6 693.2 L1674.6 689.9 L1675.6 688.8 L1676.6 686.4 L1677.6 683.8 L1678.6 682.1 L1679.6 679.1 L1680.6 676.3 L1681.6 672.4 L1682.6 673.5 L1683.6 669.6 L1684.6 668.3 L1685.6 665.1 L1686.6 663.9 L1687.6 660.4 L1688.6 662.5 L1689.6 658.1 L1690.6 654.9 L1691.6 653.0 L1692.6 651.6 L1693.6 655.6 L1694.6 650.3 L1695.6 658.9 L1696.6 660.9 L1697.6 651.9 L1698.6 649.7 L1699.6 644.8 L1700.6 645.1 L1701.6 649.0 L1702.6 643.2 L1703.6 639.3 L1704.6 637.3 L1705.6 637.1 L1706.6 636.2 L1707.6 632.2 L1708.6 634.4 L1709.6 641.9 L1710.6 639.9 L1711.6 638.7 L1712.6 636.7 L1713.6 635.8 L1714.6 634.8 L1715.6 640.2 L1716.6 637.9 L1717.6 633.2 L1718.6 632.4 L1719.6 633.5 L1720.6 638.8 L1721.6 638.5 L1722.6 639.3 L1723.6 639.2 L1724.6 638.4 L1725.6 639.8 L1726.6 641.0 L1727.6 640.3 L1728.6 642.2 L1729.6 641.5 L1730.6 640.3 L1731.6 642.5 L1732.6 639.1 L1733.6 642.1 L1734.6 643.2 L1735.6 640.7 L1736.6 641.0 L1737.6 642.8 L1738.6 643.8 L1739.6 642.8 L1740.6 642.9 L1741.6 644.0 L1742.6 643.3 L1743.6 641.6 L1744.6 643.0 L1745.6 643.2 L1746.6 641.4 L1747.6 643.1 L1748.6 641.0 L1749.6 641.5 L1750.6 637.3 L1751.6 636.3 L1752.6 633.9 L1753.6 634.7 L1754.6 631.6 L1755.6 628.3 L1756.6 624.8 L1757.6 621.0 L1758.6 617.7 L1759.6 611.5 L1760.6 613.7 L1761.6 609.3 L1762.6 607.5 L1763.6 605.2 L1764.6 607.2 L1765.6 606.7 L1766.6 602.7 L1767.6 604.7 L1768.6 603.9 L1769.6 602.5 L1770.6 603.4 L1771.6 602.9 L1772.6 601.3 L1773.6 605.1 L1774.6 607.8 L1775.6 608.7 L1776.6 610.0 L1777.6 610.4 L1778.6 613.8 L1779.6 617.6 L1780.6 621.0 L1781.6 621.7 L1782.6 624.3 L1783.6 630.2 L1784.6 632.2 L1785.6 634.9 L1786.6 638.5 L1787.6 643.3 L1788.6 651.1 L1789.6 655.1 L1790.6 657.7 L1791.6 661.0 L1792.6 669.4 L1793.6 673.9 L1794.6 677.6 L1795.6 680.5 L1796.6 679.9 L1797.6 683.2 L1798.6 688.0 L1799.6 689.2 L1800.6 691.6 L1801.6 692.2 L1802.6 693.5 L1803.6 696.3 L1804.6 696.5 L1805.6 698.1 L1806.6 699.6 L1807.6 700.6 L1808.6 702.8 L1809.6 703.6 L1810.6 700.6 L1811.6 702.2 L1812.6 702.5 L1813.6 704.6 L1814.6 702.9 L1815.6 705.6 L1816.6 706.0 L1817.6 705.8 L1818.6 703.9 L1819.6 704.7 L1820.6 703.5 L1821.6 705.1 L1822.6 705.2 L1823.6 701.2 L1824.6 701.1 L1825.6 701.2 L1826.6 700.1 L1827.6 701.3 L1828.6 697.7 L1829.6 696.1 L1830.6 692.5 L1831.6 693.7 L1832.6 690.2 L1833.6 688.8 L1834.6 685.6 L1835.6 680.3 L1836.6 678.7 L1837.6 677.3 L1838.6 677.9 L1839.6 675.6 L1840.6 675.6 L1841.6 674.4 L1842.6 673.5 L1843.6 673.5 L1844.6 671.4 L1845.6 668.1 L1846.6 668.5 L1847.6 670.4 L1848.6 666.1 L1849.6 668.0 L1850.6 667.2 L1851.6 663.1 L1852.6 662.7 L1853.6 659.4 L1854.6 660.7 L1855.6 657.2 L1856.6 654.6 L1857.6 654.4 L1858.6 653.8 L1859.6 653.7 L1860.6 654.7 L1861.6 654.3" fill="none" stroke="#f7c600" stroke-width="2.5" stroke-linejoin="round"/><path d="M1546.6 718.3 H1862" stroke="#8b4cf6" stroke-width="2"/><rect x="1492.2" y="785.5" width="14" height="4" rx="2" fill="#3480fa"/><text x="1511.0" y="790.4" font-size="11" fill="#666" text-anchor="start" letter-spacing="0.5">sapp4-0</text><rect x="1587.1" y="785.5" width="14" height="4" rx="2" fill="#1ed7a2"/><text x="1605.9" y="790.4" font-size="11" fill="#666" text-anchor="start" letter-spacing="0.5">sce_0</text><rect x="1666.8" y="785.5" width="14" height="4" rx="2" fill="#12b8d4"/><text x="1685.6" y="790.4" font-size="11" fill="#666" text-anchor="start" letter-spacing="0.5">shaping_0</text><rect x="1770.2" y="785.5" width="14" height="4" rx="2" fill="#8b4cf6"/><text x="1789.0" y="790.4" font-size="11" fill="#666" text-anchor="start" letter-spacing="0.5">tfe_0</text><rect x="1492.2" y="803.5" width="14" height="4" rx="2" fill="#f7c600"/><text x="1511.0" y="808.4" font-size="11" fill="#666" text-anchor="start" letter-spacing="0.5">sum</text><text x="256.1" y="849.8" font-size="12.5" fill="#505050" text-anchor="start" letter-spacing="0.419">Traffic (Tx)</text><text x="303.3" y="893.0" font-size="11" fill="#606060" text-anchor="end" letter-spacing="0.3">40 Gbps</text><path d="M308.2 890.2 H317.2" stroke="#f0f0f0" stroke-width="1"/><path d="M317.2 890.2 H631.4" stroke="#e3e3e3" stroke-width="1"/><text x="303.3" y="923.4" font-size="11" fill="#606060" text-anchor="end" letter-spacing="0.3">30 Gbps</text><path d="M308.2 920.6 H317.2" stroke="#f0f0f0" stroke-width="1"/><path d="M317.2 920.6 H631.4" stroke="#e3e3e3" stroke-width="1"/><text x="303.3" y="954.0" font-size="11" fill="#606060" text-anchor="end" letter-spacing="0.3">20 Gbps</text><path d="M308.2 951.2 H317.2" stroke="#f0f0f0" stroke-width="1"/><path d="M317.2 951.2 H631.4" stroke="#e3e3e3" stroke-width="1"/><text x="303.3" y="984.8" font-size="11" fill="#606060" text-anchor="end" letter-spacing="0.3">10 Gbps</text><path d="M308.2 982.0 H317.2" stroke="#f0f0f0" stroke-width="1"/><path d="M317.2 982.0 H631.4" stroke="#e3e3e3" stroke-width="1"/><text x="303.3" y="1015.6" font-size="11" fill="#606060" text-anchor="end" letter-spacing="0.3">0 bps</text><path d="M308.2 1012.8 H317.2" stroke="#f0f0f0" stroke-width="1"/><path d="M317.2 1012.8 H631.4" stroke="#e3e3e3" stroke-width="1"/><path d="M350.3 878.5 V1020.5" stroke="#e3e3e3" stroke-width="1"/><text x="350.4" y="1028.6" font-size="11" fill="#606060" text-anchor="middle" letter-spacing="0.3">9-7</text><text x="350.4" y="1045.9" font-size="11" fill="#606060" text-anchor="middle" letter-spacing="0.3">16:00</text><path d="M403.2 878.5 V1020.5" stroke="#e3e3e3" stroke-width="1"/><text x="403.3" y="1028.6" font-size="11" fill="#606060" text-anchor="middle" letter-spacing="0.3">9-8</text><text x="403.3" y="1045.9" font-size="11" fill="#606060" text-anchor="middle" letter-spacing="0.3">00:00</text><path d="M455.4 878.5 V1020.5" stroke="#e3e3e3" stroke-width="1"/><text x="455.5" y="1028.6" font-size="11" fill="#606060" text-anchor="middle" letter-spacing="0.3">9-8</text><text x="455.5" y="1045.9" font-size="11" fill="#606060" text-anchor="middle" letter-spacing="0.3">08:00</text><path d="M508.4 878.5 V1020.5" stroke="#e3e3e3" stroke-width="1"/><text x="508.5" y="1028.6" font-size="11" fill="#606060" text-anchor="middle" letter-spacing="0.3">9-8</text><text x="508.5" y="1045.9" font-size="11" fill="#606060" text-anchor="middle" letter-spacing="0.3">16:00</text><path d="M560.6 878.5 V1020.5" stroke="#e3e3e3" stroke-width="1"/><text x="560.8" y="1028.6" font-size="11" fill="#606060" text-anchor="middle" letter-spacing="0.3">9-9</text><text x="560.8" y="1045.9" font-size="11" fill="#606060" text-anchor="middle" letter-spacing="0.3">00:00</text><path d="M613.5 878.5 V1020.5" stroke="#e3e3e3" stroke-width="1"/><text x="613.6" y="1028.6" font-size="11" fill="#606060" text-anchor="middle" letter-spacing="0.3">9-9</text><text x="613.6" y="1045.9" font-size="11" fill="#606060" text-anchor="middle" letter-spacing="0.3">08:00</text><path d="M316.3 944.0 L317.3 943.4 L318.3 941.6 L319.3 939.9 L320.3 939.6 L321.3 938.4 L322.3 939.3 L323.3 940.5 L324.3 937.6 L325.3 936.8 L326.3 937.8 L327.3 937.3 L328.3 936.5 L329.3 934.9 L330.3 935.9 L331.3 936.7 L332.3 934.1 L333.3 934.9 L334.3 933.1 L335.3 933.7 L336.3 933.3 L337.3 936.0 L338.3 936.0 L339.3 939.0 L340.3 939.6 L341.3 939.0 L342.3 936.2 L343.3 938.9 L344.3 940.0 L345.3 940.2 L346.3 938.2 L347.3 939.5 L348.3 939.0 L349.3 939.4 L350.3 941.8 L351.3 939.4 L352.3 940.2 L353.3 941.2 L354.3 939.1 L355.3 939.3 L356.3 939.3 L357.3 938.7 L358.3 936.8 L359.3 938.2 L360.3 939.3 L361.3 935.3 L362.3 937.5 L363.3 936.0 L364.3 934.4 L365.3 936.8 L366.3 934.0 L367.3 929.2 L368.3 928.2 L369.3 926.0 L370.3 922.1 L371.3 919.7 L372.3 914.6 L373.3 911.3 L374.3 908.5 L375.3 903.2 L376.3 905.2 L377.3 901.2 L378.3 900.4 L379.3 897.2 L380.3 896.6 L381.3 896.2 L382.3 896.8 L383.3 898.5 L384.3 893.4 L385.3 893.5 L386.3 895.1 L387.3 892.2 L388.3 894.9 L389.3 897.2 L390.3 900.9 L391.3 902.0 L392.3 905.7 L393.3 907.8 L394.3 912.1 L395.3 918.3 L396.3 919.6 L397.3 923.4 L398.3 928.2 L399.3 931.7 L400.3 935.8 L401.3 939.5 L402.3 946.0 L403.3 951.0 L404.3 958.1 L405.3 962.1 L406.3 965.7 L407.3 970.9 L408.3 973.6 L409.3 978.4 L410.3 979.5 L411.3 982.0 L412.3 981.5 L413.3 984.9 L414.3 983.8 L415.3 984.6 L416.3 988.0 L417.3 988.7 L418.3 991.4 L419.3 995.0 L420.3 992.1 L421.3 993.0 L422.3 995.0 L423.3 996.2 L424.3 996.0 L425.3 996.5 L426.3 998.3 L427.3 998.5 L428.3 997.0 L429.3 998.6 L430.3 999.0 L431.3 997.8 L432.3 999.2 L433.3 997.6 L434.3 999.2 L435.3 997.6 L436.3 996.4 L437.3 994.7 L438.3 994.1 L439.3 990.6 L440.3 990.5 L441.3 991.0 L442.3 986.6 L443.3 988.4 L444.3 983.6 L445.3 984.2 L446.3 979.6 L447.3 978.5 L448.3 974.5 L449.3 969.5 L450.3 970.5 L451.3 968.3 L452.3 962.8 L453.3 959.0 L454.3 955.9 L455.3 952.2 L456.3 960.6 L457.3 953.1 L458.3 952.1 L459.3 949.8 L460.3 948.7 L461.3 946.4 L462.3 948.1 L463.3 945.0 L464.3 944.8 L465.3 952.3 L466.3 954.5 L467.3 946.0 L468.3 939.4 L469.3 937.7 L470.3 934.8 L471.3 932.4 L472.3 937.8 L473.3 933.8 L474.3 937.0 L475.3 934.7 L476.3 935.2 L477.3 937.7 L478.3 939.1 L479.3 934.7 L480.3 934.7 L481.3 936.1 L482.3 930.2 L483.3 931.0 L484.3 928.1 L485.3 936.1 L486.3 929.5 L487.3 930.1 L488.3 928.1 L489.3 927.8 L490.3 931.0 L491.3 929.1 L492.3 933.2 L493.3 932.2 L494.3 934.3 L495.3 934.9 L496.3 935.0 L497.3 935.3 L498.3 937.0 L499.3 936.0 L500.3 936.2 L501.3 936.7 L502.3 938.4 L503.3 937.9 L504.3 937.4 L505.3 936.1 L506.3 935.3 L507.3 938.5 L508.3 938.8 L509.3 937.6 L510.3 938.6 L511.3 939.1 L512.3 939.4 L513.3 939.4 L514.3 937.9 L515.3 940.1 L516.3 936.7 L517.3 939.0 L518.3 938.4 L519.3 938.4 L520.3 939.1 L521.3 937.6 L522.3 933.0 L523.3 930.2 L524.3 930.0 L525.3 923.9 L526.3 921.3 L527.3 918.9 L528.3 911.9 L529.3 907.8 L530.3 907.8 L531.3 907.0 L532.3 904.0 L533.3 902.5 L534.3 899.6 L535.3 897.4 L536.3 898.2 L537.3 898.3 L538.3 896.9 L539.3 899.8 L540.3 899.5 L541.3 900.3 L542.3 898.9 L543.3 901.9 L544.3 901.3 L545.3 902.6 L546.3 905.6 L547.3 906.9 L548.3 911.2 L549.3 914.6 L550.3 919.5 L551.3 918.5 L552.3 924.5 L553.3 927.0 L554.3 930.7 L555.3 932.8 L556.3 938.3 L557.3 944.4 L558.3 948.7 L559.3 954.4 L560.3 959.2 L561.3 965.2 L562.3 966.9 L563.3 967.0 L564.3 971.5 L565.3 972.4 L566.3 973.2 L567.3 979.2 L568.3 984.0 L569.3 984.3 L570.3 984.5 L571.3 986.8 L572.3 991.3 L573.3 991.7 L574.3 992.7 L575.3 993.6 L576.3 994.7 L577.3 996.6 L578.3 997.2 L579.3 997.3 L580.3 996.5 L581.3 999.0 L582.3 998.4 L583.3 1000.9 L584.3 998.3 L585.3 999.9 L586.3 1000.1 L587.3 998.7 L588.3 1002.5 L589.3 1002.0 L590.3 999.2 L591.3 1000.2 L592.3 999.0 L593.3 994.6 L594.3 997.4 L595.3 996.1 L596.3 994.5 L597.3 991.1 L598.3 990.1 L599.3 988.4 L600.3 988.3 L601.3 985.3 L602.3 982.8 L603.3 982.4 L604.3 977.6 L605.3 975.3 L606.3 971.9 L607.3 974.7 L608.3 973.0 L609.3 971.7 L610.3 970.3 L611.3 968.6 L612.3 967.8 L613.3 966.3 L614.3 965.4 L615.3 965.0 L616.3 965.9 L617.3 963.5 L618.3 961.1 L619.3 958.9 L620.3 957.6 L621.3 959.1 L622.3 956.4 L623.3 954.4 L624.3 952.6 L625.3 950.7 L626.3 951.5 L627.3 952.2 L628.3 950.1 L629.3 949.7 L630.3 949.5" fill="none" stroke="#3480fa" stroke-width="1.3" stroke-linejoin="round"/><path d="M316.3 943.1 L317.3 942.5 L318.3 940.7 L319.3 939.0 L320.3 938.7 L321.3 937.5 L322.3 938.4 L323.3 939.6 L324.3 936.7 L325.3 935.9 L326.3 936.9 L327.3 936.4 L328.3 935.6 L329.3 934.0 L330.3 935.0 L331.3 935.8 L332.3 933.2 L333.3 934.0 L334.3 932.2 L335.3 932.8 L336.3 932.4 L337.3 935.1 L338.3 935.1 L339.3 938.1 L340.3 938.7 L341.3 938.1 L342.3 935.3 L343.3 938.0 L344.3 939.1 L345.3 939.3 L346.3 937.3 L347.3 938.6 L348.3 938.1 L349.3 938.5 L350.3 940.9 L351.3 938.5 L352.3 939.3 L353.3 940.3 L354.3 938.2 L355.3 938.4 L356.3 938.4 L357.3 937.8 L358.3 935.9 L359.3 937.3 L360.3 938.4 L361.3 934.4 L362.3 936.6 L363.3 935.1 L364.3 933.5 L365.3 935.9 L366.3 933.1 L367.3 928.3 L368.3 927.3 L369.3 925.1 L370.3 921.2 L371.3 918.8 L372.3 913.7 L373.3 910.4 L374.3 907.6 L375.3 902.3 L376.3 904.3 L377.3 900.3 L378.3 899.5 L379.3 896.3 L380.3 895.7 L381.3 895.3 L382.3 895.9 L383.3 897.6 L384.3 892.5 L385.3 892.6 L386.3 894.2 L387.3 891.3 L388.3 894.0 L389.3 896.3 L390.3 900.0 L391.3 901.1 L392.3 904.8 L393.3 906.9 L394.3 911.2 L395.3 917.4 L396.3 918.7 L397.3 922.5 L398.3 927.3 L399.3 930.8 L400.3 934.9 L401.3 938.6 L402.3 945.1 L403.3 950.1 L404.3 957.2 L405.3 961.2 L406.3 964.8 L407.3 970.0 L408.3 972.7 L409.3 977.5 L410.3 978.6 L411.3 981.1 L412.3 980.6 L413.3 984.0 L414.3 982.9 L415.3 983.7 L416.3 987.1 L417.3 987.8 L418.3 990.5 L419.3 994.1 L420.3 991.2 L421.3 992.1 L422.3 994.1 L423.3 995.3 L424.3 995.1 L425.3 995.6 L426.3 997.4 L427.3 997.6 L428.3 996.1 L429.3 997.7 L430.3 998.1 L431.3 996.9 L432.3 998.3 L433.3 996.7 L434.3 998.3 L435.3 996.7 L436.3 995.5 L437.3 993.8 L438.3 993.2 L439.3 989.7 L440.3 989.6 L441.3 990.1 L442.3 985.7 L443.3 987.5 L444.3 982.7 L445.3 983.3 L446.3 978.7 L447.3 977.6 L448.3 973.6 L449.3 968.6 L450.3 969.6 L451.3 967.4 L452.3 961.9 L453.3 958.1 L454.3 955.0 L455.3 951.3 L456.3 959.7 L457.3 952.2 L458.3 951.2 L459.3 948.9 L460.3 947.8 L461.3 945.5 L462.3 947.2 L463.3 944.1 L464.3 943.9 L465.3 951.4 L466.3 953.6 L467.3 945.1 L468.3 938.5 L469.3 936.8 L470.3 933.9 L471.3 931.5 L472.3 936.9 L473.3 932.9 L474.3 936.1 L475.3 933.8 L476.3 934.3 L477.3 936.8 L478.3 938.2 L479.3 933.8 L480.3 933.8 L481.3 935.2 L482.3 929.3 L483.3 930.1 L484.3 927.2 L485.3 935.2 L486.3 928.6 L487.3 929.2 L488.3 927.2 L489.3 926.9 L490.3 930.1 L491.3 928.2 L492.3 932.3 L493.3 931.3 L494.3 933.4 L495.3 934.0 L496.3 934.1 L497.3 934.4 L498.3 936.1 L499.3 935.1 L500.3 935.3 L501.3 935.8 L502.3 937.5 L503.3 937.0 L504.3 936.5 L505.3 935.2 L506.3 934.4 L507.3 937.6 L508.3 937.9 L509.3 936.7 L510.3 937.7 L511.3 938.2 L512.3 938.5 L513.3 938.5 L514.3 937.0 L515.3 939.2 L516.3 935.8 L517.3 938.1 L518.3 937.5 L519.3 937.5 L520.3 938.2 L521.3 936.7 L522.3 932.1 L523.3 929.3 L524.3 929.1 L525.3 923.0 L526.3 920.4 L527.3 918.0 L528.3 911.0 L529.3 906.9 L530.3 906.9 L531.3 906.1 L532.3 903.1 L533.3 901.6 L534.3 898.7 L535.3 896.5 L536.3 897.3 L537.3 897.4 L538.3 896.0 L539.3 898.9 L540.3 898.6 L541.3 899.4 L542.3 898.0 L543.3 901.0 L544.3 900.4 L545.3 901.7 L546.3 904.7 L547.3 906.0 L548.3 910.3 L549.3 913.7 L550.3 918.6 L551.3 917.6 L552.3 923.6 L553.3 926.1 L554.3 929.8 L555.3 931.9 L556.3 937.4 L557.3 943.5 L558.3 947.8 L559.3 953.5 L560.3 958.3 L561.3 964.3 L562.3 966.0 L563.3 966.1 L564.3 970.6 L565.3 971.5 L566.3 972.3 L567.3 978.3 L568.3 983.1 L569.3 983.4 L570.3 983.6 L571.3 985.9 L572.3 990.4 L573.3 990.8 L574.3 991.8 L575.3 992.7 L576.3 993.8 L577.3 995.7 L578.3 996.3 L579.3 996.4 L580.3 995.6 L581.3 998.1 L582.3 997.5 L583.3 1000.0 L584.3 997.4 L585.3 999.0 L586.3 999.2 L587.3 997.8 L588.3 1001.6 L589.3 1001.1 L590.3 998.3 L591.3 999.3 L592.3 998.1 L593.3 993.7 L594.3 996.5 L595.3 995.2 L596.3 993.6 L597.3 990.2 L598.3 989.2 L599.3 987.5 L600.3 987.4 L601.3 984.4 L602.3 981.9 L603.3 981.5 L604.3 976.7 L605.3 974.4 L606.3 971.0 L607.3 973.8 L608.3 972.1 L609.3 970.8 L610.3 969.4 L611.3 967.7 L612.3 966.9 L613.3 965.4 L614.3 964.5 L615.3 964.1 L616.3 965.0 L617.3 962.6 L618.3 960.2 L619.3 958.0 L620.3 956.7 L621.3 958.2 L622.3 955.5 L623.3 953.5 L624.3 951.7 L625.3 949.8 L626.3 950.6 L627.3 951.3 L628.3 949.2 L629.3 948.8 L630.3 948.6" fill="none" stroke="#f7c600" stroke-width="2.5" stroke-linejoin="round"/><path d="M316.3 1012.6 H630.7" stroke="#8b4cf6" stroke-width="2"/><text x="666.0" y="849.7" font-size="12.5" fill="#505050" text-anchor="start" letter-spacing="0.456">Traffic (Drop)</text><text x="727.0" y="910.2" font-size="11" fill="#606060" text-anchor="end" letter-spacing="0.3">32.77 Kpps</text><path d="M732.2 907.4 H741.2" stroke="#f0f0f0" stroke-width="1"/><path d="M741.2 907.4 H1041.3" stroke="#e3e3e3" stroke-width="1"/><text x="727.0" y="954.1" font-size="11" fill="#606060" text-anchor="end" letter-spacing="0.3">16.38 Kpps</text><path d="M732.2 951.3 H741.2" stroke="#f0f0f0" stroke-width="1"/><path d="M741.2 951.3 H1041.3" stroke="#e3e3e3" stroke-width="1"/><text x="727.0" y="998.3" font-size="11" fill="#606060" text-anchor="end" letter-spacing="0.3">0 pps</text><path d="M732.2 995.5 H741.2" stroke="#f0f0f0" stroke-width="1"/><path d="M741.2 995.5 H1041.3" stroke="#e3e3e3" stroke-width="1"/><path d="M773.4 878.5 V1002.5" stroke="#e3e3e3" stroke-width="1"/><text x="773.5" y="1010.8" font-size="11" fill="#606060" text-anchor="middle" letter-spacing="0.3">9-7</text><text x="773.5" y="1028.0" font-size="11" fill="#606060" text-anchor="middle" letter-spacing="0.3">16:00</text><path d="M823.5 878.5 V1002.5" stroke="#e3e3e3" stroke-width="1"/><text x="823.6" y="1010.8" font-size="11" fill="#606060" text-anchor="middle" letter-spacing="0.3">9-8</text><text x="823.6" y="1028.0" font-size="11" fill="#606060" text-anchor="middle" letter-spacing="0.3">00:00</text><path d="M873.6 878.5 V1002.5" stroke="#e3e3e3" stroke-width="1"/><text x="873.8" y="1010.8" font-size="11" fill="#606060" text-anchor="middle" letter-spacing="0.3">9-8</text><text x="873.8" y="1028.0" font-size="11" fill="#606060" text-anchor="middle" letter-spacing="0.3">08:00</text><path d="M923.4 878.5 V1002.5" stroke="#e3e3e3" stroke-width="1"/><text x="923.5" y="1010.8" font-size="11" fill="#606060" text-anchor="middle" letter-spacing="0.3">9-8</text><text x="923.5" y="1028.0" font-size="11" fill="#606060" text-anchor="middle" letter-spacing="0.3">16:00</text><path d="M974.4 878.5 V1002.5" stroke="#e3e3e3" stroke-width="1"/><text x="974.5" y="1010.8" font-size="11" fill="#606060" text-anchor="middle" letter-spacing="0.3">9-9</text><text x="974.5" y="1028.0" font-size="11" fill="#606060" text-anchor="middle" letter-spacing="0.3">00:00</text><path d="M1024.5 878.5 V1002.5" stroke="#e3e3e3" stroke-width="1"/><text x="1024.7" y="1010.8" font-size="11" fill="#606060" text-anchor="middle" letter-spacing="0.3">9-9</text><text x="1024.7" y="1028.0" font-size="11" fill="#606060" text-anchor="middle" letter-spacing="0.3">08:00</text><path d="M896.2 995 L897.2 889 L898.4 888.3 L899 995 Z" fill="#f7c600" stroke="#f7c600" stroke-width="1"/><path d="M741.1 995.2 H1040.6" stroke="#4b5f8e" stroke-width="2"/></g><rect x="658.9" y="536" width="369.7" height="248.6" rx="3.8" fill="none" stroke="#ff140a" stroke-width="3.4"/><rect x="651" y="857.9" width="434.6" height="180" rx="3.8" fill="none" stroke="#ff140a" stroke-width="3.4"/></svg><div style="position:absolute;left:225px;top:1046px;width:1686px;height:18px;background:#fefefd;"></div><div style="position:absolute;left:216px;top:1064px;width:1704px;height:1px;background:#efefef;"></div>
</body></html>
